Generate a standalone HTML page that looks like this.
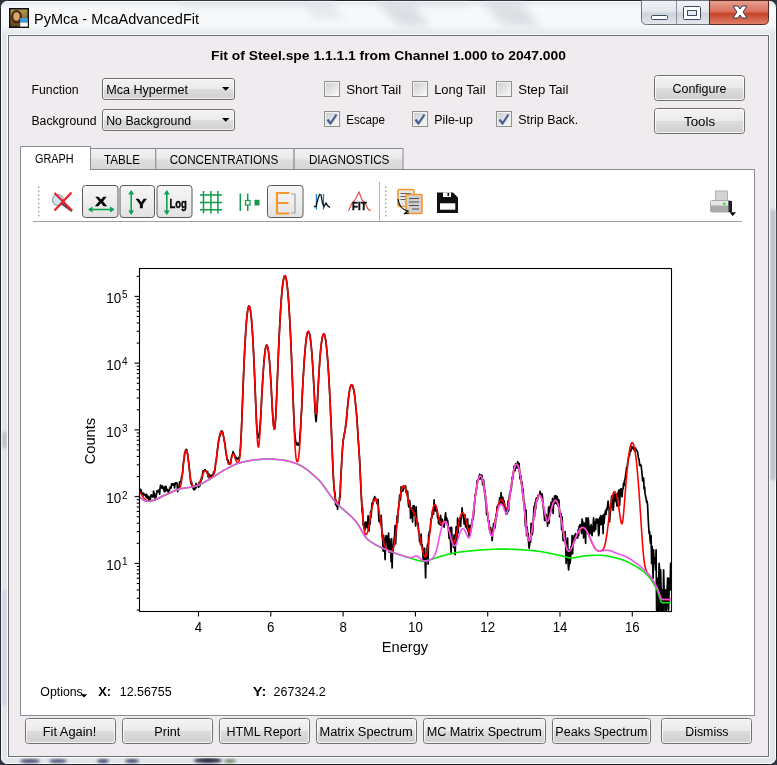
<!DOCTYPE html>
<html><head><meta charset="utf-8"><style>
html,body{margin:0;padding:0;width:777px;height:765px;overflow:hidden;background:#2c3540}
svg{display:block}
text{font-family:"Liberation Sans", sans-serif}
</style></head><body>
<svg width="777" height="765" viewBox="0 0 777 765">
<defs>
<linearGradient id="btn" x1="0" y1="0" x2="0" y2="1">
 <stop offset="0" stop-color="#f3f3f3"/><stop offset="0.48" stop-color="#ebebeb"/>
 <stop offset="0.52" stop-color="#dcdcdc"/><stop offset="1" stop-color="#cfcfcf"/>
</linearGradient>
<linearGradient id="tbtn" x1="0" y1="0" x2="0" y2="1">
 <stop offset="0" stop-color="#f6f6f6"/><stop offset="0.5" stop-color="#eeeeee"/><stop offset="1" stop-color="#e2e2e2"/>
</linearGradient>
<linearGradient id="tab" x1="0" y1="0" x2="0" y2="1">
 <stop offset="0" stop-color="#f2f2f2"/><stop offset="0.45" stop-color="#ebebeb"/>
 <stop offset="0.55" stop-color="#dddddd"/><stop offset="1" stop-color="#d6d6d6"/>
</linearGradient>
<linearGradient id="chk" x1="0" y1="0" x2="1" y2="1">
 <stop offset="0" stop-color="#cdcfd2"/><stop offset="1" stop-color="#f7f7f7"/>
</linearGradient>
<linearGradient id="title" x1="0" y1="0" x2="0" y2="1">
 <stop offset="0" stop-color="#e3e9f0"/><stop offset="0.2" stop-color="#f7f9fb"/><stop offset="0.75" stop-color="#f5f7f9"/><stop offset="1" stop-color="#e3e7eb"/>
</linearGradient>
<filter id="blur3" x="-50%" y="-50%" width="200%" height="200%"><feGaussianBlur stdDeviation="4"/></filter>
<filter id="blur1" x="-50%" y="-50%" width="200%" height="200%"><feGaussianBlur stdDeviation="1.5"/></filter>
<linearGradient id="capbtn" x1="0" y1="0" x2="0" y2="1">
 <stop offset="0" stop-color="#f0f3f7"/><stop offset="0.45" stop-color="#e3e7ec"/>
 <stop offset="0.55" stop-color="#cdd2d9"/><stop offset="1" stop-color="#e4e8ee"/>
</linearGradient>
<linearGradient id="closebtn" x1="0" y1="0" x2="0" y2="1">
 <stop offset="0" stop-color="#e8a193"/><stop offset="0.45" stop-color="#d9735f"/>
 <stop offset="0.55" stop-color="#c7432a"/><stop offset="1" stop-color="#e0826c"/>
</linearGradient>
<linearGradient id="icon" x1="0" y1="0" x2="0" y2="1">
 <stop offset="0" stop-color="#b09a50"/><stop offset="0.6" stop-color="#8a6a32"/><stop offset="1" stop-color="#5a3a1a"/>
</linearGradient>
</defs>
<rect x="0" y="0" width="777" height="765" fill="#2c3540"/>
<rect x="0.5" y="0.5" width="776" height="764" rx="7" fill="#e2e6eb" stroke="#1f2327"/>
<rect x="1.5" y="1.5" width="774" height="762" rx="6" fill="none" stroke="#ffffff" stroke-opacity="0.85"/>
<rect x="2" y="2" width="773" height="32" rx="5" fill="url(#title)"/>
<g filter="url(#blur3)" opacity="0.45"><path d="M375 2 L410 2 L430 26 L400 26 Z" fill="#b9c0c8"/><path d="M480 2 L520 2 L540 26 L505 26 Z" fill="#bcc3cb"/><path d="M300 2 L330 2 L345 18 L315 18 Z" fill="#d0d5db"/><path d="M180 2 L320 2 L320 6 L180 6 Z" fill="#c3cad3"/><path d="M400 2 L470 2 L470 6 L400 6 Z" fill="#c3cad3"/></g>
<g filter="url(#blur1)"><rect x="770.5" y="210" width="5" height="270" fill="#b9bfc5"/><rect x="2.5" y="590" width="4.5" height="115" fill="#c9cbe6" opacity="0.8"/><rect x="2.5" y="432" width="4.5" height="16" fill="#a9adb2" opacity="0.7"/></g>
<g filter="url(#blur1)" opacity="0.95"><ellipse cx="30" cy="761" rx="10" ry="2" fill="#3a3f6a"/><ellipse cx="58" cy="761" rx="9" ry="2" fill="#454a78"/><ellipse cx="103" cy="761" rx="6" ry="2" fill="#3a3f6a"/><ellipse cx="132" cy="761" rx="7" ry="2" fill="#3a3f6a"/><ellipse cx="208" cy="760.5" rx="14" ry="2.5" fill="#15182e"/><ellipse cx="230" cy="761" rx="6" ry="2" fill="#6a8a6a"/></g>
<rect x="7.5" y="34.5" width="762" height="723" fill="none" stroke="#ffffff" stroke-opacity="0.9"/>
<rect x="8.5" y="35.5" width="760" height="721" fill="#efebee" stroke="#6d6e72"/>
<rect x="9" y="8" width="20" height="20" fill="#111"/>
<rect x="10.5" y="9.5" width="17" height="17" fill="url(#icon)"/>
<ellipse cx="16.5" cy="17" rx="5.5" ry="7" fill="#4a2a12"/>
<ellipse cx="16.5" cy="16.5" rx="3.2" ry="4.2" fill="#d9a266"/>
<path d="M11 26 Q16 20 22 26 Z" fill="#6a4a22"/>
<rect x="20.2" y="18" width="7.6" height="4.6" fill="#3a9ee0"/><rect x="20.2" y="22.6" width="7.6" height="4" fill="#f4f6f8"/>
<text x="34" y="24" font-size="14.5" fill="#000" textLength="165" lengthAdjust="spacingAndGlyphs" >PyMca - McaAdvancedFit</text>
<path d="M641.5 0.5 V19.5 Q641.5 24.5 646.5 24.5 H709.5 V0.5 Z" fill="url(#capbtn)" stroke="#6b7380"/>
<line x1="676.5" y1="1" x2="676.5" y2="24" stroke="#8a929e"/>
<path d="M709.5 0.5 H768.5 V19.5 Q768.5 24.5 763.5 24.5 H709.5 Z" fill="url(#closebtn)" stroke="#5a2a22"/>
<rect x="651.5" y="15.5" width="16" height="4" rx="1" fill="#fff" stroke="#3d4a66"/>
<rect x="683.5" y="6.5" width="17" height="13" rx="1" fill="#fff" stroke="#3d4a66"/>
<rect x="687.5" y="10.5" width="9" height="5" fill="#e8ecf0" stroke="#3d4a66"/>
<path d="M733 6 L738 6 L740 9 L742 6 L747 6 L743 12 L747 18 L742 18 L740 15 L738 18 L733 18 L737 12 Z" fill="#fff" stroke="#3b3b4b" stroke-width="1"/>
<text x="211" y="59.6" font-size="12.8" font-weight="bold" fill="#000" textLength="355" lengthAdjust="spacingAndGlyphs" >Fit of Steel.spe 1.1.1.1 from Channel 1.000 to 2047.000</text>
<text x="31.5" y="94" font-size="12.5" fill="#000" textLength="47.1" lengthAdjust="spacingAndGlyphs" >Function</text>
<text x="31.5" y="125" font-size="12.5" fill="#000" textLength="65" lengthAdjust="spacingAndGlyphs" >Background</text>
<rect x="102.5" y="78.5" width="132" height="21" rx="2.5" fill="url(#btn)" stroke="#707070"/>
<rect x="103.5" y="79.5" width="130" height="19" rx="1.5" fill="none" stroke="#fcfcfc" stroke-opacity="0.7"/>
<text x="106.2" y="93.9" font-size="12.5" fill="#000" textLength="81.8" lengthAdjust="spacingAndGlyphs" >Mca Hypermet</text>
<path d="M222 87 H229.5 L225.75 90.8 Z" fill="#000"/>
<rect x="102.5" y="109.5" width="132" height="21" rx="2.5" fill="url(#btn)" stroke="#707070"/>
<rect x="103.5" y="110.5" width="130" height="19" rx="1.5" fill="none" stroke="#fcfcfc" stroke-opacity="0.7"/>
<text x="106.2" y="124.9" font-size="12.5" fill="#000" textLength="85" lengthAdjust="spacingAndGlyphs" >No Background</text>
<path d="M222 118 H229.5 L225.75 121.8 Z" fill="#000"/>
<rect x="324.5" y="81.5" width="15" height="15" fill="#f4f4f4" stroke="#8e8f8f"/>
<rect x="326" y="83" width="12" height="12" fill="url(#chk)" stroke="#f6f6f6" stroke-width="0"/>
<text x="346.2" y="94" font-size="12.5" fill="#000" textLength="55" lengthAdjust="spacingAndGlyphs" >Short Tail</text>
<rect x="324.5" y="111.5" width="15" height="15" fill="#f4f4f4" stroke="#8e8f8f"/>
<rect x="326" y="113" width="12" height="12" fill="url(#chk)" stroke="#f6f6f6" stroke-width="0"/>
<path d="M327.5 119.5 L330.5 123.5 L336.5 114.5" fill="none" stroke="#4a5b93" stroke-width="2.2" stroke-linejoin="round"/>
<text x="346.2" y="124" font-size="12.5" fill="#000" textLength="38.8" lengthAdjust="spacingAndGlyphs" >Escape</text>
<rect x="412.5" y="81.5" width="15" height="15" fill="#f4f4f4" stroke="#8e8f8f"/>
<rect x="414" y="83" width="12" height="12" fill="url(#chk)" stroke="#f6f6f6" stroke-width="0"/>
<text x="434.2" y="94" font-size="12.5" fill="#000" textLength="51.3" lengthAdjust="spacingAndGlyphs" >Long Tail</text>
<rect x="412.5" y="111.5" width="15" height="15" fill="#f4f4f4" stroke="#8e8f8f"/>
<rect x="414" y="113" width="12" height="12" fill="url(#chk)" stroke="#f6f6f6" stroke-width="0"/>
<path d="M415.5 119.5 L418.5 123.5 L424.5 114.5" fill="none" stroke="#4a5b93" stroke-width="2.2" stroke-linejoin="round"/>
<text x="434.2" y="124" font-size="12.5" fill="#000" textLength="38.6" lengthAdjust="spacingAndGlyphs" >Pile-up</text>
<rect x="496.5" y="81.5" width="15" height="15" fill="#f4f4f4" stroke="#8e8f8f"/>
<rect x="498" y="83" width="12" height="12" fill="url(#chk)" stroke="#f6f6f6" stroke-width="0"/>
<text x="518.2" y="94" font-size="12.5" fill="#000" textLength="50.2" lengthAdjust="spacingAndGlyphs" >Step Tail</text>
<rect x="496.5" y="111.5" width="15" height="15" fill="#f4f4f4" stroke="#8e8f8f"/>
<rect x="498" y="113" width="12" height="12" fill="url(#chk)" stroke="#f6f6f6" stroke-width="0"/>
<path d="M499.5 119.5 L502.5 123.5 L508.5 114.5" fill="none" stroke="#4a5b93" stroke-width="2.2" stroke-linejoin="round"/>
<text x="518.2" y="124" font-size="12.5" fill="#000" textLength="60" lengthAdjust="spacingAndGlyphs" >Strip Back.</text>
<rect x="654.5" y="75.5" width="90" height="25" rx="3" fill="url(#btn)" stroke="#707070"/>
<rect x="655.5" y="76.5" width="88" height="23" rx="2" fill="none" stroke="#fcfcfc" stroke-opacity="0.8"/>
<text x="672.5" y="92.8" font-size="12.5" fill="#000" textLength="54" lengthAdjust="spacingAndGlyphs" >Configure</text>
<rect x="654.5" y="108.5" width="90" height="25" rx="3" fill="url(#btn)" stroke="#707070"/>
<rect x="655.5" y="109.5" width="88" height="23" rx="2" fill="none" stroke="#fcfcfc" stroke-opacity="0.8"/>
<text x="684" y="125.8" font-size="12.5" fill="#000" textLength="31.1" lengthAdjust="spacingAndGlyphs" >Tools</text>
<rect x="20.5" y="169.5" width="734" height="546" fill="#fff" stroke="#898c95"/>
<rect x="90.1" y="148.5" width="65.70000000000002" height="21" fill="url(#tab)" stroke="#898c95"/>
<text x="104" y="164.3" font-size="12" fill="#000" textLength="36" lengthAdjust="spacingAndGlyphs" >TABLE</text>
<rect x="155.8" y="148.5" width="138.3" height="21" fill="url(#tab)" stroke="#898c95"/>
<text x="169.7" y="164.3" font-size="12" fill="#000" textLength="108.5" lengthAdjust="spacingAndGlyphs" >CONCENTRATIONS</text>
<rect x="294.1" y="148.5" width="108.89999999999998" height="21" fill="url(#tab)" stroke="#898c95"/>
<text x="308.9" y="164.3" font-size="12" fill="#000" textLength="80.5" lengthAdjust="spacingAndGlyphs" >DIAGNOSTICS</text>
<path d="M20.5 170 V146.5 H90.5 V170" fill="#fff" stroke="#898c95"/>
<rect x="21" y="168" width="69" height="3" fill="#fff"/>
<text x="35.1" y="163.2" font-size="12" fill="#000" textLength="38.6" lengthAdjust="spacingAndGlyphs" >GRAPH</text>
<line x1="33" y1="221.5" x2="742" y2="221.5" stroke="#a0a0a0"/>
<rect x="38" y="186.50" width="1.4" height="1.5" fill="#9a9a9a"/>
<rect x="38" y="190.55" width="1.4" height="1.5" fill="#9a9a9a"/>
<rect x="38" y="194.60" width="1.4" height="1.5" fill="#9a9a9a"/>
<rect x="38" y="198.65" width="1.4" height="1.5" fill="#9a9a9a"/>
<rect x="38" y="202.70" width="1.4" height="1.5" fill="#9a9a9a"/>
<rect x="38" y="206.75" width="1.4" height="1.5" fill="#9a9a9a"/>
<rect x="38" y="210.80" width="1.4" height="1.5" fill="#9a9a9a"/>
<rect x="38" y="214.85" width="1.4" height="1.5" fill="#9a9a9a"/>
<rect x="385" y="186.50" width="1.4" height="1.5" fill="#9a9a9a"/>
<rect x="385" y="190.55" width="1.4" height="1.5" fill="#9a9a9a"/>
<rect x="385" y="194.60" width="1.4" height="1.5" fill="#9a9a9a"/>
<rect x="385" y="198.65" width="1.4" height="1.5" fill="#9a9a9a"/>
<rect x="385" y="202.70" width="1.4" height="1.5" fill="#9a9a9a"/>
<rect x="385" y="206.75" width="1.4" height="1.5" fill="#9a9a9a"/>
<rect x="385" y="210.80" width="1.4" height="1.5" fill="#9a9a9a"/>
<rect x="385" y="214.85" width="1.4" height="1.5" fill="#9a9a9a"/>
<line x1="379.5" y1="182" x2="379.5" y2="221" stroke="#b0b0b0"/>
<circle cx="58" cy="200" r="5.5" fill="#cfe6f5" stroke="#9aa0a6" stroke-width="1.2"/>
<line x1="61" y1="203" x2="72" y2="211" stroke="#4a4a4a" stroke-width="2.2"/>
<path d="M54.5 193 L72 210.5 M71.5 192.5 L54.5 210.5" stroke="#e8202a" stroke-width="2.2"/>
<rect x="82.5" y="185.5" width="35.5" height="32" rx="3" fill="url(#tbtn)" stroke="#5a5a5a"/>
<rect x="120.0" y="185.5" width="34.5" height="32" rx="3" fill="url(#tbtn)" stroke="#5a5a5a"/>
<rect x="157.0" y="185.5" width="35.0" height="32" rx="3" fill="url(#tbtn)" stroke="#5a5a5a"/>
<rect x="267.5" y="185.5" width="35.5" height="32" rx="3" fill="url(#tbtn)" stroke="#5a5a5a"/>
<text x="95.4" y="205.6" font-size="13" font-weight="bold" stroke="#000" stroke-width="0.6" textLength="11" lengthAdjust="spacingAndGlyphs">X</text>
<path d="M89 209.5 H113.5" stroke="#10a050" stroke-width="1.6"/><path d="M88 209.5 L92.5 206.5 V212.5 Z M114.5 209.5 L110 206.5 V212.5 Z" fill="#10a050"/>
<path d="M131.2 191 V214" stroke="#10a050" stroke-width="1.6"/><path d="M131.2 190 L128.2 194.5 H134.2 Z M131.2 215 L128.2 210.5 H134.2 Z" fill="#10a050"/>
<text x="135.9" y="207.8" font-size="13.5" font-weight="bold" stroke="#000" stroke-width="0.6" textLength="10.6" lengthAdjust="spacingAndGlyphs">Y</text>
<path d="M166.8 191 V214" stroke="#10a050" stroke-width="1.6"/><path d="M166.8 190 L163.8 194.5 H169.8 Z M166.8 215 L163.8 210.5 H169.8 Z" fill="#10a050"/>
<text x="169.4" y="208.3" font-size="13" font-weight="bold" stroke="#000" stroke-width="0.4" textLength="17.4" lengthAdjust="spacingAndGlyphs">Log</text>
<path d="M203.5 191 V213.5 M210.9 191 V213.5 M217.9 191 V213.5 M200 195 H222 M200 202.4 H222 M200 209.7 H222" stroke="#139a4a" stroke-width="1.5"/>
<path d="M240.3 193.5 V211 M247.7 193.5 V211" stroke="#139a4a" stroke-width="1.5"/><rect x="245.5" y="200.5" width="4.5" height="4.5" fill="#fff" stroke="#139a4a" stroke-width="1.2"/><rect x="254.5" y="199.8" width="5" height="5.7" fill="#139a4a"/>
<path d="M289.5 193 H277 V213.5 H289.5 M277 203 H288.5" fill="none" stroke="#f59a2a" stroke-width="2.2"/>
<path d="M291 194 H295 V213 H291" fill="none" stroke="#a0a0a0" stroke-width="1.2"/>
<path d="M316.4 194 V209.5 M323.5 194 V209.5" stroke="#1a80e0" stroke-width="1.3"/>
<path d="M314 206.5 H316 L318 199 L319.5 194.5 L321 195 L322.5 203 L324 206.5 L326 203 L328 206 L330 207.5" fill="none" stroke="#111" stroke-width="1.3"/>
<path d="M348.6 210.7 L352 203 L355 200 L359.1 192.2 L362 200 L365 203 L368 209 L370.7 210.7" fill="none" stroke="#f04040" stroke-width="1.1"/>
<text x="352.1" y="209.9" font-size="10.5" font-weight="bold" stroke="#111" stroke-width="0.5" textLength="14.5" lengthAdjust="spacingAndGlyphs" fill="#111">FIT</text>
<rect x="398" y="189.5" width="16" height="17" rx="1.5" fill="#e8e8e8" stroke="#f59a2a" stroke-width="1.6"/>
<path d="M400.5 193.5 H411 M400.5 196.5 H410 M400.5 199.5 H409" stroke="#606060" stroke-width="1"/>
<rect x="406" y="194.5" width="16" height="19" rx="1" fill="#cfcfcf" stroke="#f59a2a" stroke-width="1.6"/>
<path d="M409 198.5 H419 M409 202 H419 M409 205.5 H419 M412 209 H419" stroke="#505050" stroke-width="1"/>
<path d="M398 199 Q399 209 408 211 L404 214 L409 213" fill="none" stroke="#111" stroke-width="1.2"/>
<path d="M437 192.5 H453 L458 197.5 V213 H437 Z" fill="#111"/>
<rect x="440" y="203.3" width="15.3" height="6.4" fill="#fff"/><rect x="443" y="192.5" width="8" height="4.5" fill="#fff"/><rect x="447.5" y="193" width="1.6" height="3" fill="#111"/>
<rect x="715.5" y="191" width="12" height="10" fill="#d4d4d4" stroke="#b0b0b0"/>
<path d="M713 200 H729 Q732 200 732 204 V210 Q732 212.5 729 212.5 H712.5 Q710 212.5 710 210 V203 Q710 200 713 200 Z" fill="#a9a9ad"/>
<rect x="711" y="201" width="17" height="4.5" fill="#e6e6e8"/><rect x="728.5" y="201" width="3.5" height="11" fill="#222"/>
<circle cx="724.3" cy="203.8" r="1.3" fill="#2ee02e"/>
<path d="M729.5 212.2 H736 L732.75 216 Z" fill="#000"/>
<g stroke="#000" stroke-width="1.1">
<line x1="198.50" y1="611.5" x2="198.50" y2="616.4"/>
<line x1="270.80" y1="611.5" x2="270.80" y2="616.4"/>
<line x1="343.10" y1="611.5" x2="343.10" y2="616.4"/>
<line x1="415.40" y1="611.5" x2="415.40" y2="616.4"/>
<line x1="487.70" y1="611.5" x2="487.70" y2="616.4"/>
<line x1="560.00" y1="611.5" x2="560.00" y2="616.4"/>
<line x1="632.30" y1="611.5" x2="632.30" y2="616.4"/>
<line x1="136.70" y1="610.06" x2="139.5" y2="610.06"/>
<line x1="136.70" y1="598.30" x2="139.5" y2="598.30"/>
<line x1="136.70" y1="589.96" x2="139.5" y2="589.96"/>
<line x1="136.70" y1="583.49" x2="139.5" y2="583.49"/>
<line x1="136.70" y1="578.21" x2="139.5" y2="578.21"/>
<line x1="136.70" y1="573.74" x2="139.5" y2="573.74"/>
<line x1="136.70" y1="569.87" x2="139.5" y2="569.87"/>
<line x1="136.70" y1="566.45" x2="139.5" y2="566.45"/>
<line x1="134.60" y1="563.40" x2="139.5" y2="563.40"/>
<line x1="136.70" y1="543.31" x2="139.5" y2="543.31"/>
<line x1="136.70" y1="531.55" x2="139.5" y2="531.55"/>
<line x1="136.70" y1="523.21" x2="139.5" y2="523.21"/>
<line x1="136.70" y1="516.74" x2="139.5" y2="516.74"/>
<line x1="136.70" y1="511.46" x2="139.5" y2="511.46"/>
<line x1="136.70" y1="506.99" x2="139.5" y2="506.99"/>
<line x1="136.70" y1="503.12" x2="139.5" y2="503.12"/>
<line x1="136.70" y1="499.70" x2="139.5" y2="499.70"/>
<line x1="134.60" y1="496.65" x2="139.5" y2="496.65"/>
<line x1="136.70" y1="476.56" x2="139.5" y2="476.56"/>
<line x1="136.70" y1="464.80" x2="139.5" y2="464.80"/>
<line x1="136.70" y1="456.46" x2="139.5" y2="456.46"/>
<line x1="136.70" y1="449.99" x2="139.5" y2="449.99"/>
<line x1="136.70" y1="444.71" x2="139.5" y2="444.71"/>
<line x1="136.70" y1="440.24" x2="139.5" y2="440.24"/>
<line x1="136.70" y1="436.37" x2="139.5" y2="436.37"/>
<line x1="136.70" y1="432.95" x2="139.5" y2="432.95"/>
<line x1="134.60" y1="429.90" x2="139.5" y2="429.90"/>
<line x1="136.70" y1="409.81" x2="139.5" y2="409.81"/>
<line x1="136.70" y1="398.05" x2="139.5" y2="398.05"/>
<line x1="136.70" y1="389.71" x2="139.5" y2="389.71"/>
<line x1="136.70" y1="383.24" x2="139.5" y2="383.24"/>
<line x1="136.70" y1="377.96" x2="139.5" y2="377.96"/>
<line x1="136.70" y1="373.49" x2="139.5" y2="373.49"/>
<line x1="136.70" y1="369.62" x2="139.5" y2="369.62"/>
<line x1="136.70" y1="366.20" x2="139.5" y2="366.20"/>
<line x1="134.60" y1="363.15" x2="139.5" y2="363.15"/>
<line x1="136.70" y1="343.06" x2="139.5" y2="343.06"/>
<line x1="136.70" y1="331.30" x2="139.5" y2="331.30"/>
<line x1="136.70" y1="322.96" x2="139.5" y2="322.96"/>
<line x1="136.70" y1="316.49" x2="139.5" y2="316.49"/>
<line x1="136.70" y1="311.21" x2="139.5" y2="311.21"/>
<line x1="136.70" y1="306.74" x2="139.5" y2="306.74"/>
<line x1="136.70" y1="302.87" x2="139.5" y2="302.87"/>
<line x1="136.70" y1="299.45" x2="139.5" y2="299.45"/>
<line x1="134.60" y1="296.40" x2="139.5" y2="296.40"/>
<line x1="136.70" y1="276.31" x2="139.5" y2="276.31"/>
</g>
<text x="194.80" y="632" font-size="14" textLength="7.4" lengthAdjust="spacingAndGlyphs">4</text>
<text x="267.10" y="632" font-size="14" textLength="7.4" lengthAdjust="spacingAndGlyphs">6</text>
<text x="339.40" y="632" font-size="14" textLength="7.4" lengthAdjust="spacingAndGlyphs">8</text>
<text x="408.05" y="632" font-size="14" textLength="14.7" lengthAdjust="spacingAndGlyphs">10</text>
<text x="480.35" y="632" font-size="14" textLength="14.7" lengthAdjust="spacingAndGlyphs">12</text>
<text x="552.65" y="632" font-size="14" textLength="14.7" lengthAdjust="spacingAndGlyphs">14</text>
<text x="624.95" y="632" font-size="14" textLength="14.7" lengthAdjust="spacingAndGlyphs">16</text>
<text x="106.3" y="570.20" font-size="14" textLength="14.9" lengthAdjust="spacingAndGlyphs">10</text>
<text x="122" y="565.40" font-size="10">1</text>
<text x="106.3" y="503.45" font-size="14" textLength="14.9" lengthAdjust="spacingAndGlyphs">10</text>
<text x="122" y="498.65" font-size="10">2</text>
<text x="106.3" y="436.70" font-size="14" textLength="14.9" lengthAdjust="spacingAndGlyphs">10</text>
<text x="122" y="431.90" font-size="10">3</text>
<text x="106.3" y="369.95" font-size="14" textLength="14.9" lengthAdjust="spacingAndGlyphs">10</text>
<text x="122" y="365.15" font-size="10">4</text>
<text x="106.3" y="303.20" font-size="14" textLength="14.9" lengthAdjust="spacingAndGlyphs">10</text>
<text x="122" y="298.40" font-size="10">5</text>
<text x="381.8" y="652" font-size="14.6" textLength="46.4" lengthAdjust="spacingAndGlyphs">Energy</text>
<text transform="translate(95.4 464.3) rotate(-90)" x="0" y="0" font-size="14.6" textLength="46.5" lengthAdjust="spacingAndGlyphs">Counts</text>
<clipPath id="ax"><rect x="139.5" y="268.5" width="532" height="343"/></clipPath>
<g clip-path="url(#ax)" fill="none" stroke-linejoin="round">
<path d="M139.60 489.62 L140.10 489.17 L140.60 492.14 L141.10 489.82 L141.60 492.99 L142.10 493.91 L142.60 493.04 L143.10 495.32 L143.60 493.44 L144.10 494.74 L144.60 494.34 L145.10 495.43 L145.60 494.76 L146.10 496.94 L146.60 494.44 L147.10 498.11 L147.60 496.70 L148.10 496.13 L148.60 500.36 L149.10 496.86 L149.60 497.79 L150.10 501.19 L150.60 497.86 L151.10 494.87 L151.60 496.14 L152.10 495.70 L152.60 497.01 L153.10 497.11 L153.60 491.08 L154.10 495.29 L154.60 493.60 L155.10 498.39 L155.60 495.05 L156.10 496.75 L156.60 493.83 L157.10 490.71 L157.60 491.94 L158.10 491.67 L158.60 490.27 L159.10 490.12 L159.60 494.24 L160.10 488.01 L160.60 485.13 L161.10 486.63 L161.60 487.90 L162.10 485.77 L162.60 488.34 L163.10 486.77 L163.60 487.75 L164.10 491.22 L164.60 491.77 L165.10 486.42 L165.60 491.22 L166.10 486.64 L166.60 490.45 L167.10 489.29 L167.60 490.83 L168.10 490.68 L168.60 493.43 L169.10 489.25 L169.60 490.10 L170.10 487.15 L170.60 488.05 L171.10 488.12 L171.60 483.82 L172.10 484.53 L172.60 484.02 L173.10 485.12 L173.60 484.23 L174.10 483.54 L174.60 487.85 L175.10 483.28 L175.60 483.79 L176.10 482.66 L176.60 483.34 L177.10 483.03 L177.60 491.73 L178.10 487.25 L178.60 487.53 L179.10 487.49 L179.60 481.94 L180.10 482.70 L180.60 482.57 L181.10 480.78 L181.60 476.70 L182.10 475.79 L182.60 472.94 L183.10 465.47 L183.60 460.83 L184.10 459.65 L184.60 453.42 L185.10 451.97 L185.60 450.23 L186.10 449.51 L186.60 449.47 L187.10 452.52 L187.60 453.31 L188.10 459.25 L188.60 461.57 L189.10 466.33 L189.60 471.61 L190.10 475.58 L190.60 481.41 L191.10 483.98 L191.60 482.05 L192.10 485.81 L192.60 487.49 L193.10 487.12 L193.60 489.59 L194.10 485.96 L194.60 489.63 L195.10 488.64 L195.60 488.49 L196.10 483.28 L196.60 486.83 L197.10 484.99 L197.60 485.67 L198.10 485.63 L198.60 487.33 L199.10 482.55 L199.60 482.41 L200.10 485.68 L200.60 479.88 L201.10 480.99 L201.60 477.13 L202.10 478.81 L202.60 473.75 L203.10 470.87 L203.60 471.15 L204.10 470.85 L204.60 469.73 L205.10 469.69 L205.60 471.18 L206.10 471.01 L206.60 471.76 L207.10 473.37 L207.60 471.54 L208.10 476.90 L208.60 474.99 L209.10 474.13 L209.60 479.46 L210.10 477.21 L210.60 476.52 L211.10 475.15 L211.60 476.12 L212.10 477.04 L212.60 477.08 L213.10 474.38 L213.60 472.04 L214.10 473.48 L214.60 471.33 L215.10 469.27 L215.60 462.75 L216.10 461.87 L216.60 457.55 L217.10 453.45 L217.60 448.42 L218.10 445.22 L218.60 440.35 L219.10 439.38 L219.60 436.50 L220.10 433.76 L220.60 434.27 L221.10 431.36 L221.60 432.00 L222.10 430.96 L222.60 432.25 L223.10 434.27 L223.60 436.56 L224.10 440.17 L224.60 442.06 L225.10 444.54 L225.60 449.99 L226.10 454.08 L226.60 455.78 L227.10 459.54 L227.60 460.35 L228.10 460.11 L228.60 464.17 L229.10 462.83 L229.60 463.32 L230.10 462.79 L230.60 463.82 L231.10 459.60 L231.60 456.80 L232.10 454.95 L232.60 454.19 L233.10 451.68 L233.60 453.66 L234.10 453.89 L234.60 454.68 L235.10 457.21 L235.60 458.39 L236.10 457.34 L236.60 458.67 L237.10 459.33 L237.60 458.20 L238.10 458.85 L238.60 458.76 L239.10 457.24 L239.60 456.27 L240.10 452.40 L240.60 445.17 L241.10 436.18 L241.60 425.85 L242.10 412.33 L242.60 399.65 L243.10 386.46 L243.60 374.21 L244.10 362.63 L244.60 351.90 L245.10 342.26 L245.60 333.73 L246.10 326.12 L246.60 319.97 L247.10 314.79 L247.60 310.97 L248.10 308.18 L248.60 306.43 L249.10 305.97 L249.60 306.75 L250.10 308.65 L250.60 311.50 L251.10 315.92 L251.60 320.90 L252.10 327.70 L252.60 335.14 L253.10 343.77 L253.60 353.61 L254.10 364.19 L254.60 375.99 L255.10 388.29 L255.60 400.53 L256.10 411.97 L256.60 423.53 L257.10 430.05 L257.60 434.33 L258.10 437.72 L258.60 437.33 L259.10 436.53 L259.60 431.87 L260.10 425.93 L260.60 418.85 L261.10 409.79 L261.60 398.75 L262.10 391.03 L262.60 381.88 L263.10 373.82 L263.60 366.77 L264.10 360.61 L264.60 355.24 L265.10 350.85 L265.60 347.66 L266.10 345.92 L266.60 345.04 L267.10 345.20 L267.60 346.91 L268.10 348.76 L268.60 352.50 L269.10 357.03 L269.60 362.22 L270.10 369.55 L270.60 376.88 L271.10 385.15 L271.60 394.93 L272.10 404.86 L272.60 413.74 L273.10 420.12 L273.60 425.72 L274.10 428.34 L274.60 429.15 L275.10 424.41 L275.60 419.29 L276.10 408.64 L276.60 398.26 L277.10 385.79 L277.60 373.43 L278.10 360.96 L278.60 349.44 L279.10 337.90 L279.60 327.85 L280.10 318.43 L280.60 310.02 L281.10 302.39 L281.60 295.84 L282.10 290.10 L282.60 285.36 L283.10 281.55 L283.60 278.73 L284.10 276.80 L284.60 275.83 L285.10 275.79 L285.60 276.68 L286.10 278.44 L286.60 281.15 L287.10 284.93 L287.60 289.51 L288.10 295.17 L288.60 301.57 L289.10 309.17 L289.60 317.19 L290.10 326.64 L290.60 337.02 L291.10 347.57 L291.60 359.60 L292.10 372.24 L292.60 385.20 L293.10 399.00 L293.60 409.59 L294.10 421.89 L294.60 431.00 L295.10 437.07 L295.60 440.72 L296.10 442.46 L296.60 444.69 L297.10 443.18 L297.60 444.52 L298.10 445.25 L298.60 445.13 L299.10 442.88 L299.60 441.70 L300.10 433.49 L300.60 428.12 L301.10 417.81 L301.60 410.13 L302.10 399.21 L302.60 388.31 L303.10 380.06 L303.60 371.06 L304.10 363.27 L304.60 356.27 L305.10 349.83 L305.60 344.47 L306.10 340.05 L306.60 336.43 L307.10 333.98 L307.60 332.19 L308.10 331.49 L308.60 331.66 L309.10 332.46 L309.60 334.16 L310.10 336.94 L310.60 340.55 L311.10 345.16 L311.60 350.32 L312.10 356.54 L312.60 364.31 L313.10 372.62 L313.60 381.58 L314.10 390.63 L314.60 401.42 L315.10 411.14 L315.60 417.61 L316.10 421.71 L316.60 415.29 L317.10 407.45 L317.60 399.55 L318.10 388.85 L318.60 379.31 L319.10 370.80 L319.60 363.27 L320.10 356.80 L320.60 350.47 L321.10 345.54 L321.60 341.87 L322.10 338.55 L322.60 336.18 L323.10 334.78 L323.60 333.78 L324.10 333.99 L324.60 335.23 L325.10 337.09 L325.60 339.58 L326.10 343.41 L326.60 347.97 L327.10 352.95 L327.60 359.37 L328.10 366.15 L328.60 374.17 L329.10 382.57 L329.60 391.82 L330.10 400.70 L330.60 413.58 L331.10 422.87 L331.60 436.32 L332.10 447.64 L332.60 460.75 L333.10 474.09 L333.60 481.36 L334.10 488.49 L334.60 492.10 L335.10 493.74 L335.60 504.68 L336.10 500.48 L336.60 506.21 L337.10 504.83 L337.60 509.30 L338.10 502.55 L338.60 502.49 L339.10 504.29 L339.60 497.44 L340.10 497.39 L340.60 482.32 L341.10 471.68 L341.60 464.78 L342.10 455.25 L342.60 447.29 L343.10 441.62 L343.60 438.15 L344.10 434.90 L344.60 432.23 L345.10 431.24 L345.60 425.54 L346.10 423.64 L346.60 418.62 L347.10 411.59 L347.60 407.08 L348.10 401.61 L348.60 397.01 L349.10 393.40 L349.60 390.02 L350.10 387.80 L350.60 386.32 L351.10 385.12 L351.60 384.77 L352.10 385.71 L352.60 385.81 L353.10 387.39 L353.60 389.71 L354.10 390.85 L354.60 395.46 L355.10 399.77 L355.60 404.48 L356.10 409.72 L356.60 414.15 L357.10 421.17 L357.60 429.32 L358.10 438.62 L358.60 444.53 L359.10 452.40 L359.60 458.28 L360.10 469.83 L360.60 480.68 L361.10 493.16 L361.60 501.28 L362.10 512.19 L362.60 507.86 L363.10 525.23 L363.60 521.76 L364.10 526.59 L364.60 525.04 L365.10 529.69 L365.60 522.15 L366.10 525.59 L366.60 522.03 L367.10 527.78 L367.60 524.66 L368.10 515.90 L368.60 530.11 L369.10 530.94 L369.60 519.12 L370.10 524.34 L370.60 511.57 L371.10 517.16 L371.60 508.33 L372.10 502.91 L372.60 504.65 L373.10 502.09 L373.60 498.80 L374.10 500.63 L374.60 496.61 L375.10 497.41 L375.60 498.54 L376.10 499.40 L376.60 502.32 L377.10 503.68 L377.60 504.36 L378.10 499.45 L378.60 515.60 L379.10 521.73 L379.60 519.02 L380.10 520.91 L380.60 524.42 L381.10 515.26 L381.60 522.80 L382.10 536.36 L382.60 538.70 L383.10 551.03 L383.60 535.01 L384.10 550.89 L384.60 547.19 L385.10 559.74 L385.60 538.29 L386.10 535.80 L386.60 535.73 L387.10 539.37 L387.60 548.53 L388.10 541.99 L388.60 533.22 L389.10 552.19 L389.60 539.01 L390.10 544.76 L390.60 543.12 L391.10 561.65 L391.60 538.72 L392.10 567.98 L392.60 549.68 L393.10 551.61 L393.60 544.25 L394.10 539.71 L394.60 535.77 L395.10 525.60 L395.60 543.96 L396.10 534.36 L396.60 524.54 L397.10 515.92 L397.60 522.78 L398.10 512.28 L398.60 507.66 L399.10 504.49 L399.60 495.14 L400.10 500.42 L400.60 498.94 L401.10 486.79 L401.60 491.22 L402.10 489.10 L402.60 491.12 L403.10 490.55 L403.60 487.50 L404.10 488.17 L404.60 487.64 L405.10 485.97 L405.60 486.15 L406.10 492.45 L406.60 491.29 L407.10 494.73 L407.60 491.20 L408.10 500.80 L408.60 506.19 L409.10 507.08 L409.60 500.28 L410.10 504.26 L410.60 518.45 L411.10 508.35 L411.60 509.32 L412.10 508.25 L412.60 522.03 L413.10 505.76 L413.60 511.84 L414.10 505.66 L414.60 515.37 L415.10 512.27 L415.60 526.07 L416.10 506.88 L416.60 516.49 L417.10 523.25 L417.60 522.36 L418.10 524.02 L418.60 532.02 L419.10 533.15 L419.60 541.44 L420.10 539.83 L420.60 544.76 L421.10 534.19 L421.60 544.66 L422.10 544.61 L422.60 548.43 L423.10 558.14 L423.60 561.14 L424.10 550.43 L424.60 548.23 L425.10 560.99 L425.60 577.98 L426.10 555.08 L426.60 557.79 L427.10 547.98 L427.60 544.06 L428.10 564.11 L428.60 534.73 L429.10 533.39 L429.60 530.92 L430.10 532.06 L430.60 524.58 L431.10 518.63 L431.60 518.58 L432.10 515.63 L432.60 510.52 L433.10 511.65 L433.60 514.13 L434.10 499.80 L434.60 510.32 L435.10 509.69 L435.60 510.80 L436.10 506.36 L436.60 510.11 L437.10 511.85 L437.60 517.96 L438.10 515.71 L438.60 523.76 L439.10 517.80 L439.60 519.32 L440.10 524.55 L440.60 515.44 L441.10 525.43 L441.60 520.76 L442.10 519.05 L442.60 520.66 L443.10 523.28 L443.60 523.23 L444.10 527.18 L444.60 522.20 L445.10 517.17 L445.60 512.86 L446.10 520.28 L446.60 517.78 L447.10 520.17 L447.60 520.12 L448.10 524.68 L448.60 531.34 L449.10 538.39 L449.60 535.29 L450.10 527.62 L450.60 543.52 L451.10 552.45 L451.60 527.46 L452.10 541.48 L452.60 543.30 L453.10 543.24 L453.60 547.33 L454.10 534.79 L454.60 543.07 L455.10 554.77 L455.60 541.09 L456.10 526.96 L456.60 542.85 L457.10 539.17 L457.60 518.18 L458.10 532.93 L458.60 521.58 L459.10 525.53 L459.60 519.65 L460.10 517.89 L460.60 526.45 L461.10 518.62 L461.60 518.56 L462.10 507.91 L462.60 515.22 L463.10 513.68 L463.60 514.35 L464.10 523.90 L464.60 515.76 L465.10 514.93 L465.60 527.01 L466.10 523.67 L466.60 519.74 L467.10 529.26 L467.60 518.73 L468.10 531.78 L468.60 529.08 L469.10 536.13 L469.60 525.41 L470.10 534.44 L470.60 528.84 L471.10 531.42 L471.60 523.02 L472.10 522.96 L472.60 518.14 L473.10 518.97 L473.60 515.50 L474.10 507.10 L474.60 503.62 L475.10 494.43 L475.60 494.76 L476.10 490.29 L476.60 489.22 L477.10 480.91 L477.60 480.85 L478.10 480.29 L478.60 478.81 L479.10 477.39 L479.60 474.38 L480.10 479.09 L480.60 476.76 L481.10 475.01 L481.60 477.98 L482.10 475.51 L482.60 484.78 L483.10 483.30 L483.60 480.10 L484.10 485.78 L484.60 492.87 L485.10 490.57 L485.60 501.21 L486.10 502.20 L486.60 514.71 L487.10 510.06 L487.60 515.42 L488.10 519.97 L488.60 521.98 L489.10 520.86 L489.60 530.55 L490.10 527.72 L490.60 527.66 L491.10 530.36 L491.60 531.78 L492.10 540.57 L492.60 534.87 L493.10 528.68 L493.60 523.56 L494.10 523.50 L494.60 528.48 L495.10 527.07 L495.60 521.07 L496.10 514.32 L496.60 516.93 L497.10 506.71 L497.60 506.65 L498.10 506.58 L498.60 503.99 L499.10 505.79 L499.60 497.87 L500.10 504.40 L500.60 499.25 L501.10 492.71 L501.60 500.71 L502.10 504.75 L502.60 496.98 L503.10 499.43 L503.60 505.83 L504.10 500.92 L504.60 505.70 L505.10 509.88 L505.60 508.32 L506.10 513.83 L506.60 513.76 L507.10 513.69 L507.60 511.91 L508.10 500.93 L508.60 510.96 L509.10 500.79 L509.60 494.14 L510.10 494.07 L510.60 490.58 L511.10 490.51 L511.60 485.29 L512.10 477.30 L512.60 479.36 L513.10 475.18 L513.60 472.15 L514.10 466.39 L514.60 467.78 L515.10 470.66 L515.60 463.95 L516.10 464.88 L516.60 467.87 L517.10 467.79 L517.60 461.59 L518.10 467.84 L518.60 467.57 L519.10 463.44 L519.60 472.60 L520.10 478.82 L520.60 475.30 L521.10 476.77 L521.60 485.21 L522.10 482.11 L522.60 493.63 L523.10 489.16 L523.60 499.25 L524.10 504.92 L524.60 503.47 L525.10 521.53 L525.60 526.99 L526.10 510.05 L526.60 535.69 L527.10 526.76 L527.60 533.54 L528.10 533.46 L528.60 542.37 L529.10 548.11 L529.60 544.98 L530.10 539.62 L530.60 542.06 L531.10 523.24 L531.60 526.06 L532.10 534.83 L532.60 532.75 L533.10 524.33 L533.60 514.50 L534.10 506.34 L534.60 516.49 L535.10 502.50 L535.60 509.42 L536.10 499.08 L536.60 497.79 L537.10 500.18 L537.60 499.46 L538.10 495.27 L538.60 495.74 L539.10 495.11 L539.60 495.03 L540.10 491.36 L540.60 493.36 L541.10 496.65 L541.60 494.42 L542.10 493.89 L542.60 498.44 L543.10 506.17 L543.60 509.59 L544.10 513.46 L544.60 520.45 L545.10 515.61 L545.60 520.45 L546.10 514.51 L546.60 517.93 L547.10 520.45 L547.60 526.27 L548.10 517.93 L548.60 506.99 L549.10 523.21 L549.60 510.51 L550.10 506.17 L550.60 511.46 L551.10 502.40 L551.60 506.99 L552.10 505.38 L552.60 498.44 L553.10 513.46 L553.60 502.40 L554.10 503.85 L554.60 496.08 L555.10 503.12 L555.60 495.51 L556.10 496.08 L556.60 503.85 L557.10 496.65 L557.60 499.70 L558.10 506.17 L558.60 499.70 L559.10 501.02 L559.60 516.74 L560.10 516.74 L560.60 515.61 L561.10 513.46 L561.60 529.68 L562.10 516.74 L562.60 529.68 L563.10 540.54 L563.60 540.54 L564.10 540.54 L564.60 540.54 L565.10 531.55 L565.60 540.54 L566.10 563.40 L566.60 553.65 L567.10 543.31 L567.60 538.02 L568.10 563.40 L568.60 569.87 L569.10 563.40 L569.60 549.77 L570.10 563.40 L570.60 558.11 L571.10 546.36 L571.60 553.65 L572.10 535.70 L572.60 553.65 L573.10 538.02 L573.60 540.54 L574.10 535.70 L574.60 540.54 L575.10 535.70 L575.60 533.55 L576.10 538.02 L576.60 538.02 L577.10 535.70 L577.60 538.02 L578.10 529.68 L578.60 535.70 L579.10 526.27 L579.60 529.68 L580.10 524.70 L580.60 529.68 L581.10 524.70 L581.60 533.55 L582.10 519.16 L582.60 521.80 L583.10 523.21 L583.60 538.02 L584.10 526.27 L584.60 523.21 L585.10 531.55 L585.60 543.31 L586.10 517.93 L586.60 520.45 L587.10 527.92 L587.60 531.55 L588.10 517.93 L588.60 521.80 L589.10 535.70 L589.60 526.27 L590.10 533.55 L590.60 531.55 L591.10 524.70 L591.60 531.55 L592.10 535.70 L592.60 527.92 L593.10 526.27 L593.60 517.93 L594.10 531.55 L594.60 521.80 L595.10 527.92 L595.60 529.68 L596.10 519.16 L596.60 523.21 L597.10 520.45 L597.60 519.16 L598.10 521.80 L598.60 535.70 L599.10 533.55 L599.60 517.93 L600.10 524.70 L600.60 515.61 L601.10 524.70 L601.60 517.93 L602.10 517.93 L602.60 515.61 L603.10 533.55 L603.60 514.51 L604.10 523.21 L604.60 516.74 L605.10 512.44 L605.60 510.51 L606.10 514.51 L606.60 508.70 L607.10 509.59 L607.60 505.38 L608.10 501.02 L608.60 505.38 L609.10 508.70 L609.60 521.80 L610.10 514.51 L610.60 509.59 L611.10 506.99 L611.60 496.08 L612.10 501.02 L612.60 497.83 L613.10 510.51 L613.60 506.17 L614.10 493.89 L614.60 501.02 L615.10 496.08 L615.60 494.42 L616.10 501.02 L616.60 503.12 L617.10 506.17 L617.60 493.89 L618.10 493.36 L618.60 490.89 L619.10 489.95 L619.60 505.38 L620.10 494.42 L620.60 489.04 L621.10 488.60 L621.60 495.51 L622.10 496.65 L622.60 489.49 L623.10 489.04 L623.60 483.02 L624.10 485.68 L624.60 480.26 L625.10 478.66 L625.60 475.14 L626.10 471.76 L626.60 467.43 L627.10 469.17 L627.60 462.93 L628.10 461.17 L628.60 457.95 L629.10 453.96 L629.60 455.19 L630.10 450.58 L630.60 449.08 L631.10 450.94 L631.60 446.30 L632.10 448.41 L632.60 448.09 L633.10 447.23 L633.60 448.97 L634.10 449.31 L634.60 451.06 L635.10 450.46 L635.60 448.20 L636.10 449.99 L636.60 450.46 L637.10 450.82 L637.60 452.41 L638.10 455.61 L638.60 459.20 L639.10 459.20 L639.60 465.39 L640.10 464.80 L640.60 464.61 L641.10 465.59 L641.60 469.63 L642.10 474.33 L642.60 480.93 L643.10 478.35 L643.60 478.04 L644.10 489.04 L644.60 486.90 L645.10 493.89 L645.60 496.65 L646.10 497.83 L646.60 502.40 L647.10 501.02 L647.60 505.38 L648.10 516.74 L648.60 526.27 L649.10 533.55 L649.60 531.55 L650.10 540.54 L650.60 543.31 L651.10 535.70 L651.60 563.40 L652.10 546.36 L652.60 563.40 L653.10 578.21 L653.60 549.77 L654.10 563.40 L654.60 563.40 L655.10 558.11 L655.60 569.87 L656.10 549.77 L656.60 610.06 L657.10 578.21 L657.60 610.06 L658.10 616.50 L658.60 589.96 L659.10 563.40 L659.60 569.87 L660.10 616.50 L660.60 569.87 L661.10 589.96 L661.60 610.06 L662.10 589.96 L662.60 616.50 L663.10 610.06 L663.60 569.87 L664.10 589.96 L664.60 589.96 L665.10 616.50 L665.60 610.06 L666.10 589.96 L666.60 610.06 L667.10 589.96 L667.60 578.21 L668.10 578.21 L668.60 610.06 L669.10 589.96 L669.60 578.21 L670.10 589.96 L670.60 563.40 L671.10 589.96" stroke="#000" stroke-width="1.7"/>
<path d="M139.50 491.92 L140.00 492.51 L140.50 493.16 L141.00 493.86 L141.50 494.59 L142.00 495.34 L142.50 496.09 L143.00 496.82 L143.50 497.53 L144.00 498.19 L144.50 498.79 L145.00 499.33 L145.50 499.81 L146.00 500.20 L146.50 500.52 L147.00 500.76 L147.50 500.92 L148.00 501.02 L148.50 501.07 L149.00 501.09 L149.50 501.08 L150.00 501.04 L150.50 500.98 L151.00 500.89 L151.50 500.79 L152.00 500.67 L152.50 500.54 L153.00 500.39 L153.50 500.23 L154.00 500.06 L154.50 499.89 L155.00 499.70 L155.50 499.50 L156.00 499.30 L156.50 499.09 L157.00 498.87 L157.50 498.65 L158.00 498.42 L158.50 498.19 L159.00 497.96 L159.50 497.72 L160.00 497.48 L160.50 497.24 L161.00 496.99 L161.50 496.75 L162.00 496.51 L162.50 496.27 L163.00 496.03 L163.50 495.79 L164.00 495.56 L164.50 495.33 L165.00 495.10 L165.50 494.88 L166.00 494.67 L166.50 494.46 L167.00 494.26 L167.50 494.05 L168.00 493.84 L168.50 493.62 L169.00 493.39 L169.50 493.15 L170.00 492.91 L170.50 492.67 L171.00 492.43 L171.50 492.18 L172.00 491.94 L172.50 491.70 L173.00 491.46 L173.50 491.22 L174.00 490.99 L174.50 490.76 L175.00 490.55 L175.50 490.34 L176.00 490.14 L176.50 489.94 L177.00 489.76 L177.50 489.57 L178.00 489.37 L178.50 489.14 L179.00 488.80 L179.50 488.27 L180.00 487.42 L180.50 486.08 L181.00 484.06 L181.50 481.24 L182.00 477.61 L182.50 473.32 L183.00 468.67 L183.50 463.99 L184.00 459.65 L184.50 455.92 L185.00 453.02 L185.50 451.10 L186.00 450.24 L186.50 450.48 L187.00 451.80 L187.50 454.15 L188.00 457.39 L188.50 461.35 L189.00 465.76 L189.50 470.31 L190.00 474.63 L190.50 478.40 L191.00 481.39 L191.50 483.55 L192.00 484.95 L192.50 485.77 L193.00 486.20 L193.50 486.37 L194.00 486.39 L194.50 486.34 L195.00 486.24 L195.50 486.12 L196.00 485.98 L196.50 485.81 L197.00 485.60 L197.50 485.35 L198.00 485.03 L198.50 484.62 L199.00 484.08 L199.50 483.38 L200.00 482.49 L200.50 481.38 L201.00 480.07 L201.50 478.59 L202.00 477.01 L202.50 475.41 L203.00 473.91 L203.50 472.60 L204.00 471.57 L204.50 470.88 L205.00 470.57 L205.50 470.64 L206.00 471.06 L206.50 471.78 L207.00 472.70 L207.50 473.73 L208.00 474.77 L208.50 475.73 L209.00 476.53 L209.50 477.13 L210.00 477.52 L210.50 477.69 L211.00 477.66 L211.50 477.45 L212.00 477.04 L212.50 476.41 L213.00 475.53 L213.50 474.31 L214.00 472.70 L214.50 470.62 L215.00 468.02 L215.50 464.93 L216.00 461.41 L216.50 457.57 L217.00 453.57 L217.50 449.55 L218.00 445.69 L218.50 442.12 L219.00 438.94 L219.50 436.25 L220.00 434.12 L220.50 432.58 L221.00 431.67 L221.50 431.40 L222.00 431.77 L222.50 432.76 L223.00 434.35 L223.50 436.49 L224.00 439.10 L224.50 442.11 L225.00 445.39 L225.50 448.80 L226.00 452.20 L226.50 455.40 L227.00 458.27 L227.50 460.66 L228.00 462.49 L228.50 463.69 L229.00 464.22 L229.50 464.05 L230.00 463.22 L230.50 461.81 L231.00 460.00 L231.50 458.05 L232.00 456.26 L232.50 454.90 L233.00 454.16 L233.50 454.13 L234.00 454.79 L234.50 455.99 L235.00 457.52 L235.50 459.13 L236.00 460.57 L236.50 461.68 L237.00 462.41 L237.50 462.75 L238.00 462.72 L238.50 462.26 L239.00 461.16 L239.50 458.99 L240.00 455.09 L240.50 448.79 L241.00 439.80 L241.50 428.51 L242.00 415.76 L242.50 402.45 L243.00 389.25 L243.50 376.60 L244.00 364.76 L244.50 353.88 L245.00 344.04 L245.50 335.30 L246.00 327.68 L246.50 321.19 L247.00 315.85 L247.50 311.66 L248.00 308.63 L248.50 306.76 L249.00 306.05 L249.50 306.49 L250.00 308.10 L250.50 310.87 L251.00 314.79 L251.50 319.86 L252.00 326.08 L252.50 333.43 L253.00 341.90 L253.50 351.46 L254.00 362.06 L254.50 373.61 L255.00 385.94 L255.50 398.78 L256.00 411.67 L256.50 423.86 L257.00 434.35 L257.50 442.09 L258.00 446.39 L258.50 447.10 L259.00 444.52 L259.50 439.13 L260.00 431.53 L260.50 422.45 L261.00 412.61 L261.50 402.60 L262.00 392.89 L262.50 383.77 L263.00 375.44 L263.50 368.01 L264.00 361.56 L264.50 356.15 L265.00 351.79 L265.50 348.51 L266.00 346.31 L266.50 345.22 L267.00 345.21 L267.50 346.31 L268.00 348.50 L268.50 351.78 L269.00 356.14 L269.50 361.56 L270.00 368.01 L270.50 375.45 L271.00 383.79 L271.50 392.86 L272.00 402.33 L272.50 411.64 L273.00 419.86 L273.50 425.90 L274.00 428.97 L274.50 428.93 L275.00 425.98 L275.50 420.22 L276.00 411.69 L276.50 400.88 L277.00 388.67 L277.50 375.98 L278.00 363.44 L278.50 351.44 L279.00 340.18 L279.50 329.76 L280.00 320.22 L280.50 311.58 L281.00 303.86 L281.50 297.07 L282.00 291.20 L282.50 286.27 L283.00 282.28 L283.50 279.22 L284.00 277.10 L284.50 275.92 L285.00 275.67 L285.50 276.37 L286.00 278.00 L286.50 280.57 L287.00 284.07 L287.50 288.51 L288.00 293.89 L288.50 300.19 L289.00 307.43 L289.50 315.59 L290.00 324.67 L290.50 334.65 L291.00 345.52 L291.50 357.22 L292.00 369.70 L292.50 382.83 L293.00 396.41 L293.50 410.10 L294.00 423.34 L294.50 435.38 L295.00 445.39 L295.50 452.82 L296.00 457.68 L296.50 460.44 L297.00 461.66 L297.50 461.73 L298.00 460.70 L298.50 458.38 L299.00 454.45 L299.50 448.66 L300.00 441.04 L300.50 431.95 L301.00 421.91 L301.50 411.48 L302.00 401.10 L302.50 391.06 L303.00 381.58 L303.50 372.78 L304.00 364.74 L304.50 357.53 L305.00 351.15 L305.50 345.64 L306.00 341.02 L306.50 337.27 L307.00 334.42 L307.50 332.47 L308.00 331.41 L308.50 331.26 L309.00 332.00 L309.50 333.64 L310.00 336.18 L310.50 339.62 L311.00 343.95 L311.50 349.16 L312.00 355.25 L312.50 362.19 L313.00 369.95 L313.50 378.44 L314.00 387.47 L314.50 396.65 L315.00 405.16 L315.50 411.59 L316.00 414.17 L316.50 412.03 L317.00 406.03 L317.50 397.90 L318.00 389.07 L318.50 380.35 L319.00 372.13 L319.50 364.60 L320.00 357.85 L320.50 351.91 L321.00 346.79 L321.50 342.52 L322.00 339.10 L322.50 336.53 L323.00 334.82 L323.50 333.96 L324.00 333.96 L324.50 334.82 L325.00 336.53 L325.50 339.10 L326.00 342.53 L326.50 346.81 L327.00 351.94 L327.50 357.92 L328.00 364.75 L328.50 372.40 L329.00 380.87 L329.50 390.14 L330.00 400.16 L330.50 410.89 L331.00 422.21 L331.50 433.98 L332.00 445.94 L332.50 457.73 L333.00 468.82 L333.50 478.63 L334.00 486.64 L334.50 492.65 L335.00 496.80 L335.50 499.53 L336.00 501.28 L336.50 502.43 L337.00 503.22 L337.50 503.75 L338.00 504.00 L338.50 503.75 L339.00 502.50 L339.50 499.42 L340.00 493.72 L340.50 485.36 L341.00 475.34 L341.50 465.12 L342.00 455.87 L342.50 448.27 L343.00 442.56 L343.50 438.60 L344.00 435.93 L344.50 433.81 L345.00 431.36 L345.50 427.96 L346.00 423.46 L346.50 418.20 L347.00 412.69 L347.50 407.33 L348.00 402.39 L348.50 397.99 L349.00 394.19 L349.50 391.02 L350.00 388.48 L350.50 386.59 L351.00 385.33 L351.50 384.73 L352.00 384.77 L352.50 385.46 L353.00 386.80 L353.50 388.78 L354.00 391.40 L354.50 394.68 L355.00 398.59 L355.50 403.14 L356.00 408.32 L356.50 414.12 L357.00 420.54 L357.50 427.56 L358.00 435.15 L358.50 443.28 L359.00 451.90 L359.50 460.93 L360.00 470.28 L360.50 479.78 L361.00 489.22 L361.50 498.34 L362.00 506.80 L362.50 514.29 L363.00 520.57 L363.50 525.52 L364.00 529.19 L364.50 531.75 L365.00 533.40 L365.50 534.31 L366.00 534.59 L366.50 534.32 L367.00 533.52 L367.50 532.19 L368.00 530.40 L368.50 528.18 L369.00 525.61 L369.50 522.76 L370.00 519.72 L370.50 516.61 L371.00 513.53 L371.50 510.57 L372.00 507.82 L372.50 505.34 L373.00 503.20 L373.50 501.43 L374.00 500.07 L374.50 499.14 L375.00 498.67 L375.50 498.65 L376.00 499.10 L376.50 500.01 L377.00 501.38 L377.50 503.18 L378.00 505.41 L378.50 508.02 L379.00 510.97 L379.50 514.22 L380.00 517.70 L380.50 521.33 L381.00 525.02 L381.50 528.67 L382.00 532.18 L382.50 535.45 L383.00 538.40 L383.50 540.97 L384.00 543.14 L384.50 544.91 L385.00 546.33 L385.50 547.44 L386.00 548.29 L386.50 548.95 L387.00 549.46 L387.50 549.87 L388.00 550.19 L388.50 550.46 L389.00 550.69 L389.50 550.87 L390.00 550.99 L390.50 551.05 L391.00 551.01 L391.50 550.82 L392.00 550.43 L392.50 549.77 L393.00 548.74 L393.50 547.25 L394.00 545.24 L394.50 542.64 L395.00 539.45 L395.50 535.73 L396.00 531.56 L396.50 527.08 L397.00 522.42 L397.50 517.71 L398.00 513.09 L398.50 508.66 L399.00 504.49 L399.50 500.67 L400.00 497.23 L400.50 494.21 L401.00 491.63 L401.50 489.52 L402.00 487.89 L402.50 486.73 L403.00 486.04 L403.50 485.82 L404.00 486.05 L404.50 486.70 L405.00 487.74 L405.50 489.13 L406.00 490.81 L406.50 492.73 L407.00 494.81 L407.50 496.96 L408.00 499.09 L408.50 501.12 L409.00 502.98 L409.50 504.62 L410.00 506.02 L410.50 507.17 L411.00 508.13 L411.50 508.93 L412.00 509.65 L412.50 510.34 L413.00 511.06 L413.50 511.88 L414.00 512.81 L414.50 513.91 L415.00 515.18 L415.50 516.64 L416.00 518.31 L416.50 520.17 L417.00 522.23 L417.50 524.48 L418.00 526.88 L418.50 529.44 L419.00 532.10 L419.50 534.85 L420.00 537.63 L420.50 540.39 L421.00 543.10 L421.50 545.69 L422.00 548.11 L422.50 550.32 L423.00 552.27 L423.50 553.92 L424.00 555.23 L424.50 556.17 L425.00 556.69 L425.50 556.74 L426.00 556.23 L426.50 555.10 L427.00 553.27 L427.50 550.73 L428.00 547.50 L428.50 543.67 L429.00 539.39 L429.50 534.84 L430.00 530.21 L430.50 525.66 L431.00 521.34 L431.50 517.37 L432.00 513.84 L432.50 510.81 L433.00 508.34 L433.50 506.46 L434.00 505.18 L434.50 504.51 L435.00 504.44 L435.50 504.95 L436.00 506.00 L436.50 507.54 L437.00 509.49 L437.50 511.75 L438.00 514.19 L438.50 516.64 L439.00 518.95 L439.50 520.94 L440.00 522.47 L440.50 523.49 L441.00 523.98 L441.50 524.01 L442.00 523.71 L442.50 523.21 L443.00 522.63 L443.50 522.09 L444.00 521.66 L444.50 521.42 L445.00 521.41 L445.50 521.64 L446.00 522.14 L446.50 522.89 L447.00 523.91 L447.50 525.16 L448.00 526.64 L448.50 528.30 L449.00 530.12 L449.50 532.04 L450.00 534.02 L450.50 535.98 L451.00 537.86 L451.50 539.57 L452.00 541.03 L452.50 542.15 L453.00 542.85 L453.50 543.07 L454.00 542.76 L454.50 541.94 L455.00 540.61 L455.50 538.84 L456.00 536.72 L456.50 534.32 L457.00 531.76 L457.50 529.13 L458.00 526.51 L458.50 523.98 L459.00 521.62 L459.50 519.46 L460.00 517.56 L460.50 515.95 L461.00 514.65 L461.50 513.69 L462.00 513.08 L462.50 512.82 L463.00 512.91 L463.50 513.36 L464.00 514.15 L464.50 515.27 L465.00 516.70 L465.50 518.40 L466.00 520.33 L466.50 522.44 L467.00 524.63 L467.50 526.82 L468.00 528.86 L468.50 530.62 L469.00 531.91 L469.50 532.56 L470.00 532.43 L470.50 531.42 L471.00 529.53 L471.50 526.84 L472.00 523.49 L472.50 519.65 L473.00 515.49 L473.50 511.19 L474.00 506.87 L474.50 502.65 L475.00 498.60 L475.50 494.78 L476.00 491.25 L476.50 488.03 L477.00 485.16 L477.50 482.66 L478.00 480.53 L478.50 478.79 L479.00 477.45 L479.50 476.51 L480.00 475.97 L480.50 475.84 L481.00 476.12 L481.50 476.81 L482.00 477.90 L482.50 479.40 L483.00 481.28 L483.50 483.55 L484.00 486.19 L484.50 489.19 L485.00 492.52 L485.50 496.15 L486.00 500.06 L486.50 504.18 L487.00 508.47 L487.50 512.82 L488.00 517.16 L488.50 521.34 L489.00 525.23 L489.50 528.67 L490.00 531.50 L490.50 533.58 L491.00 534.82 L491.50 535.21 L492.00 534.76 L492.50 533.58 L493.00 531.79 L493.50 529.54 L494.00 526.97 L494.50 524.19 L495.00 521.31 L495.50 518.43 L496.00 515.62 L496.50 512.93 L497.00 510.42 L497.50 508.12 L498.00 506.06 L498.50 504.25 L499.00 502.73 L499.50 501.50 L500.00 500.57 L500.50 499.94 L501.00 499.61 L501.50 499.58 L502.00 499.84 L502.50 500.37 L503.00 501.15 L503.50 502.14 L504.00 503.29 L504.50 504.53 L505.00 505.78 L505.50 506.91 L506.00 507.80 L506.50 508.28 L507.00 508.23 L507.50 507.53 L508.00 506.11 L508.50 504.01 L509.00 501.31 L509.50 498.14 L510.00 494.65 L510.50 491.01 L511.00 487.35 L511.50 483.77 L512.00 480.37 L512.50 477.20 L513.00 474.32 L513.50 471.76 L514.00 469.55 L514.50 467.70 L515.00 466.23 L515.50 465.14 L516.00 464.45 L516.50 464.16 L517.00 464.26 L517.50 464.77 L518.00 465.67 L518.50 466.98 L519.00 468.68 L519.50 470.77 L520.00 473.24 L520.50 476.09 L521.00 479.31 L521.50 482.88 L522.00 486.78 L522.50 490.98 L523.00 495.45 L523.50 500.15 L524.00 505.03 L524.50 510.00 L525.00 514.99 L525.50 519.89 L526.00 524.57 L526.50 528.90 L527.00 532.73 L527.50 535.93 L528.00 538.38 L528.50 540.02 L529.00 540.79 L529.50 540.71 L530.00 539.83 L530.50 538.24 L531.00 536.04 L531.50 533.34 L532.00 530.27 L532.50 526.94 L533.00 523.47 L533.50 519.96 L534.00 516.50 L534.50 513.15 L535.00 509.98 L535.50 507.04 L536.00 504.37 L536.50 502.00 L537.00 499.95 L537.50 498.25 L538.00 496.92 L538.50 495.95 L539.00 495.36 L539.50 495.15 L540.00 495.31 L540.50 495.86 L541.00 496.77 L541.50 498.03 L542.00 499.63 L542.50 501.53 L543.00 503.71 L543.50 506.10 L544.00 508.64 L544.50 511.24 L545.00 513.79 L545.50 516.15 L546.00 518.19 L546.50 519.76 L547.00 520.75 L547.50 521.09 L548.00 520.78 L548.50 519.88 L549.00 518.49 L549.50 516.74 L550.00 514.76 L550.50 512.67 L551.00 510.58 L551.50 508.57 L552.00 506.71 L552.50 505.03 L553.00 503.57 L553.50 502.36 L554.00 501.41 L554.50 500.75 L555.00 500.37 L555.50 500.28 L556.00 500.49 L556.50 500.99 L557.00 501.78 L557.50 502.87 L558.00 504.24 L558.50 505.88 L559.00 507.79 L559.50 509.94 L560.00 512.33 L560.50 514.94 L561.00 517.72 L561.50 520.67 L562.00 523.73 L562.50 526.86 L563.00 530.01 L563.50 533.14 L564.00 536.16 L564.50 539.03 L565.00 541.69 L565.50 544.07 L566.00 546.14 L566.50 547.86 L567.00 549.22 L567.50 550.23 L568.00 550.88 L568.50 551.21 L569.00 551.25 L569.50 551.02 L570.00 550.57 L570.50 549.92 L571.00 549.10 L571.50 548.14 L572.00 547.07 L572.50 545.90 L573.00 544.67 L573.50 543.39 L574.00 542.08 L574.50 540.76 L575.00 539.44 L575.50 538.13 L576.00 536.86 L576.50 535.63 L577.00 534.46 L577.50 533.35 L578.00 532.32 L578.50 531.37 L579.00 530.51 L579.50 529.75 L580.00 529.09 L580.50 528.54 L581.00 528.09 L581.50 527.76 L582.00 527.55 L582.50 527.45 L583.00 527.47 L583.50 527.60 L584.00 527.85 L584.50 528.22 L585.00 528.69 L585.50 529.26 L586.00 529.92 L586.50 530.69 L587.00 531.53 L587.50 532.46 L588.00 533.45 L588.50 534.50 L589.00 535.60 L589.50 536.74 L590.00 537.91 L590.50 539.09 L591.00 540.27 L591.50 541.44 L592.00 542.58 L592.50 543.69 L593.00 544.74 L593.50 545.73 L594.00 546.65 L594.50 547.49 L595.00 548.24 L595.50 548.91 L596.00 549.49 L596.50 549.97 L597.00 550.37 L597.50 550.68 L598.00 550.92 L598.50 551.08 L599.00 551.17 L599.50 551.20 L600.00 551.17 L600.50 551.08 L601.00 550.92 L601.50 550.70 L602.00 550.39 L602.50 549.96 L603.00 549.38 L603.50 548.60 L604.00 547.56 L604.50 546.21 L605.00 544.49 L605.50 542.34 L606.00 539.76 L606.50 536.74 L607.00 533.34 L607.50 529.63 L608.00 525.70 L608.50 521.67 L609.00 517.62 L609.50 513.66 L610.00 509.88 L610.50 506.34 L611.00 503.10 L611.50 500.21 L612.00 497.70 L612.50 495.60 L613.00 493.93 L613.50 492.71 L614.00 491.95 L614.50 491.65 L615.00 491.82 L615.50 492.46 L616.00 493.55 L616.50 495.11 L617.00 497.10 L617.50 499.51 L618.00 502.31 L618.50 505.45 L619.00 508.86 L619.50 512.42 L620.00 515.96 L620.50 519.25 L621.00 521.93 L621.50 523.59 L622.00 523.82 L622.50 522.33 L623.00 519.13 L623.50 514.48 L624.00 508.78 L624.50 502.48 L625.00 495.94 L625.50 489.41 L626.00 483.08 L626.50 477.07 L627.00 471.45 L627.50 466.27 L628.00 461.57 L628.50 457.37 L629.00 453.67 L629.50 450.50 L630.00 447.86 L630.50 445.75 L631.00 444.17 L631.50 443.14 L632.00 442.65 L632.50 442.70 L633.00 443.29 L633.50 444.42 L634.00 446.09 L634.50 448.30 L635.00 451.05 L635.50 454.33 L636.00 458.14 L636.50 462.48 L637.00 467.33 L637.50 472.68 L638.00 478.52 L638.50 484.82 L639.00 491.55 L639.50 498.66 L640.00 506.09 L640.50 513.74 L641.00 521.50 L641.50 529.21 L642.00 536.67 L642.50 543.67 L643.00 549.99 L643.50 555.46 L644.00 559.98 L644.50 563.58 L645.00 566.34 L645.50 568.42 L646.00 569.98 L646.50 571.18 L647.00 572.13 L647.50 572.92 L648.00 573.63 L648.50 574.30 L649.00 574.96 L649.50 575.62 L650.00 576.28 L650.50 576.96 L651.00 577.66 L651.50 578.38 L652.00 579.12 L652.50 579.88 L653.00 580.65 L653.50 581.44 L654.00 582.25 L654.50 583.08 L655.00 583.92 L655.50 584.78 L656.00 585.65 L656.50 586.54 L657.00 587.46 L657.50 588.59 L658.00 589.91 L658.50 591.37 L659.00 592.87 L659.50 594.37 L660.00 595.79 L660.50 597.06 L661.00 598.12 L661.50 598.91 L662.00 599.36 L662.50 599.45 L663.00 599.45 L663.50 599.46 L664.00 599.47 L664.50 599.47 L665.00 599.48 L665.50 599.48 L666.00 599.49 L666.50 599.49 L667.00 599.49 L667.50 599.49 L668.00 599.50 L668.50 599.50 L669.00 599.50 L669.50 599.50 L670.00 599.50 L670.50 599.50 L671.00 599.50 L671.50 599.50" stroke="#ff0000" stroke-width="1.6"/>
<path d="M139.50 497.00 L140.00 497.40 L140.50 497.79 L141.00 498.18 L141.50 498.56 L142.00 498.93 L142.50 499.28 L143.00 499.61 L143.50 499.92 L144.00 500.21 L144.50 500.47 L145.00 500.71 L145.50 500.90 L146.00 501.06 L146.50 501.19 L147.00 501.27 L147.50 501.30 L148.00 501.29 L148.50 501.27 L149.00 501.23 L149.50 501.18 L150.00 501.11 L150.50 501.02 L151.00 500.92 L151.50 500.81 L152.00 500.68 L152.50 500.54 L153.00 500.40 L153.50 500.24 L154.00 500.07 L154.50 499.89 L155.00 499.70 L155.50 499.50 L156.00 499.30 L156.50 499.09 L157.00 498.87 L157.50 498.65 L158.00 498.42 L158.50 498.19 L159.00 497.96 L159.50 497.72 L160.00 497.48 L160.50 497.24 L161.00 496.99 L161.50 496.75 L162.00 496.51 L162.50 496.27 L163.00 496.03 L163.50 495.79 L164.00 495.56 L164.50 495.33 L165.00 495.10 L165.50 494.88 L166.00 494.67 L166.50 494.46 L167.00 494.26 L167.50 494.05 L168.00 493.84 L168.50 493.62 L169.00 493.39 L169.50 493.15 L170.00 492.91 L170.50 492.67 L171.00 492.43 L171.50 492.18 L172.00 491.94 L172.50 491.70 L173.00 491.46 L173.50 491.22 L174.00 490.99 L174.50 490.76 L175.00 490.55 L175.50 490.34 L176.00 490.14 L176.50 489.95 L177.00 489.77 L177.50 489.61 L178.00 489.46 L178.50 489.32 L179.00 489.19 L179.50 489.07 L180.00 488.95 L180.50 488.84 L181.00 488.74 L181.50 488.64 L182.00 488.54 L182.50 488.45 L183.00 488.36 L183.50 488.27 L184.00 488.19 L184.50 488.11 L185.00 488.03 L185.50 487.96 L186.00 487.88 L186.50 487.81 L187.00 487.73 L187.50 487.66 L188.00 487.59 L188.50 487.51 L189.00 487.43 L189.50 487.36 L190.00 487.28 L190.50 487.19 L191.00 487.11 L191.50 487.02 L192.00 486.93 L192.50 486.83 L193.00 486.73 L193.50 486.62 L194.00 486.51 L194.50 486.39 L195.00 486.27 L195.50 486.14 L196.00 486.00 L196.50 485.85 L197.00 485.69 L197.50 485.52 L198.00 485.33 L198.50 485.13 L199.00 484.92 L199.50 484.71 L200.00 484.48 L200.50 484.24 L201.00 484.00 L201.50 483.74 L202.00 483.48 L202.50 483.22 L203.00 482.95 L203.50 482.67 L204.00 482.40 L204.50 482.11 L205.00 481.83 L205.50 481.54 L206.00 481.25 L206.50 480.96 L207.00 480.67 L207.50 480.39 L208.00 480.10 L208.50 479.82 L209.00 479.53 L209.50 479.26 L210.00 478.98 L210.50 478.69 L211.00 478.40 L211.50 478.10 L212.00 477.80 L212.50 477.49 L213.00 477.18 L213.50 476.86 L214.00 476.54 L214.50 476.22 L215.00 475.90 L215.50 475.57 L216.00 475.24 L216.50 474.91 L217.00 474.58 L217.50 474.25 L218.00 473.92 L218.50 473.59 L219.00 473.27 L219.50 472.94 L220.00 472.62 L220.50 472.30 L221.00 471.99 L221.50 471.68 L222.00 471.37 L222.50 471.07 L223.00 470.77 L223.50 470.48 L224.00 470.20 L224.50 469.92 L225.00 469.66 L225.50 469.40 L226.00 469.14 L226.50 468.87 L227.00 468.61 L227.50 468.35 L228.00 468.09 L228.50 467.82 L229.00 467.56 L229.50 467.30 L230.00 467.04 L230.50 466.78 L231.00 466.53 L231.50 466.27 L232.00 466.03 L232.50 465.78 L233.00 465.54 L233.50 465.30 L234.00 465.06 L234.50 464.84 L235.00 464.61 L235.50 464.40 L236.00 464.19 L236.50 463.98 L237.00 463.78 L237.50 463.59 L238.00 463.41 L238.50 463.24 L239.00 463.07 L239.50 462.91 L240.00 462.77 L240.50 462.63 L241.00 462.50 L241.50 462.38 L242.00 462.26 L242.50 462.14 L243.00 462.03 L243.50 461.91 L244.00 461.80 L244.50 461.69 L245.00 461.58 L245.50 461.48 L246.00 461.37 L246.50 461.27 L247.00 461.17 L247.50 461.08 L248.00 460.98 L248.50 460.89 L249.00 460.80 L249.50 460.71 L250.00 460.63 L250.50 460.54 L251.00 460.46 L251.50 460.38 L252.00 460.31 L252.50 460.23 L253.00 460.16 L253.50 460.09 L254.00 460.03 L254.50 459.96 L255.00 459.90 L255.50 459.84 L256.00 459.78 L256.50 459.73 L257.00 459.68 L257.50 459.63 L258.00 459.58 L258.50 459.54 L259.00 459.50 L259.50 459.46 L260.00 459.42 L260.50 459.38 L261.00 459.34 L261.50 459.30 L262.00 459.27 L262.50 459.23 L263.00 459.19 L263.50 459.16 L264.00 459.13 L264.50 459.10 L265.00 459.08 L265.50 459.05 L266.00 459.04 L266.50 459.02 L267.00 459.01 L267.50 459.00 L268.00 459.00 L268.50 459.00 L269.00 459.01 L269.50 459.02 L270.00 459.03 L270.50 459.04 L271.00 459.06 L271.50 459.08 L272.00 459.11 L272.50 459.13 L273.00 459.16 L273.50 459.20 L274.00 459.23 L274.50 459.27 L275.00 459.31 L275.50 459.35 L276.00 459.39 L276.50 459.43 L277.00 459.48 L277.50 459.53 L278.00 459.57 L278.50 459.62 L279.00 459.68 L279.50 459.73 L280.00 459.78 L280.50 459.84 L281.00 459.89 L281.50 459.94 L282.00 460.00 L282.50 460.06 L283.00 460.12 L283.50 460.19 L284.00 460.27 L284.50 460.35 L285.00 460.44 L285.50 460.53 L286.00 460.63 L286.50 460.73 L287.00 460.84 L287.50 460.95 L288.00 461.07 L288.50 461.19 L289.00 461.32 L289.50 461.45 L290.00 461.59 L290.50 461.73 L291.00 461.87 L291.50 462.02 L292.00 462.17 L292.50 462.32 L293.00 462.48 L293.50 462.65 L294.00 462.81 L294.50 462.98 L295.00 463.15 L295.50 463.33 L296.00 463.51 L296.50 463.69 L297.00 463.87 L297.50 464.07 L298.00 464.28 L298.50 464.49 L299.00 464.72 L299.50 464.96 L300.00 465.21 L300.50 465.47 L301.00 465.74 L301.50 466.02 L302.00 466.31 L302.50 466.61 L303.00 466.92 L303.50 467.23 L304.00 467.56 L304.50 467.89 L305.00 468.23 L305.50 468.58 L306.00 468.94 L306.50 469.30 L307.00 469.68 L307.50 470.05 L308.00 470.44 L308.50 470.83 L309.00 471.23 L309.50 471.63 L310.00 472.04 L310.50 472.46 L311.00 472.88 L311.50 473.30 L312.00 473.74 L312.50 474.17 L313.00 474.61 L313.50 475.05 L314.00 475.50 L314.50 475.95 L315.00 476.40 L315.50 476.86 L316.00 477.32 L316.50 477.79 L317.00 478.25 L317.50 478.72 L318.00 479.19 L318.50 479.68 L319.00 480.20 L319.50 480.74 L320.00 481.30 L320.50 481.89 L321.00 482.49 L321.50 483.11 L322.00 483.74 L322.50 484.40 L323.00 485.06 L323.50 485.74 L324.00 486.42 L324.50 487.12 L325.00 487.82 L325.50 488.54 L326.00 489.25 L326.50 489.97 L327.00 490.70 L327.50 491.42 L328.00 492.14 L328.50 492.87 L329.00 493.58 L329.50 494.30 L330.00 495.01 L330.50 495.71 L331.00 496.40 L331.50 497.09 L332.00 497.76 L332.50 498.42 L333.00 499.06 L333.50 499.69 L334.00 500.31 L334.50 500.90 L335.00 501.48 L335.50 502.03 L336.00 502.57 L336.50 503.10 L337.00 503.62 L337.50 504.13 L338.00 504.63 L338.50 505.12 L339.00 505.60 L339.50 506.07 L340.00 506.54 L340.50 507.00 L341.00 507.45 L341.50 507.90 L342.00 508.34 L342.50 508.78 L343.00 509.22 L343.50 509.65 L344.00 510.08 L344.50 510.51 L345.00 510.94 L345.50 511.37 L346.00 511.81 L346.50 512.24 L347.00 512.67 L347.50 513.11 L348.00 513.55 L348.50 514.00 L349.00 514.45 L349.50 514.90 L350.00 515.36 L350.50 515.83 L351.00 516.31 L351.50 516.79 L352.00 517.29 L352.50 517.79 L353.00 518.31 L353.50 518.83 L354.00 519.37 L354.50 519.91 L355.00 520.48 L355.50 521.05 L356.00 521.64 L356.50 522.25 L357.00 522.90 L357.50 523.61 L358.00 524.37 L358.50 525.16 L359.00 525.99 L359.50 526.84 L360.00 527.71 L360.50 528.60 L361.00 529.50 L361.50 530.40 L362.00 531.30 L362.50 532.18 L363.00 533.06 L363.50 533.91 L364.00 534.73 L364.50 535.52 L365.00 536.27 L365.50 536.97 L366.00 537.62 L366.50 538.21 L367.00 538.74 L367.50 539.20 L368.00 539.62 L368.50 540.02 L369.00 540.41 L369.50 540.80 L370.00 541.17 L370.50 541.54 L371.00 541.89 L371.50 542.24 L372.00 542.58 L372.50 542.90 L373.00 543.23 L373.50 543.54 L374.00 543.84 L374.50 544.14 L375.00 544.43 L375.50 544.72 L376.00 544.99 L376.50 545.27 L377.00 545.53 L377.50 545.79 L378.00 546.04 L378.50 546.29 L379.00 546.54 L379.50 546.78 L380.00 547.01 L380.50 547.24 L381.00 547.47 L381.50 547.70 L382.00 547.92 L382.50 548.14 L383.00 548.35 L383.50 548.56 L384.00 548.78 L384.50 548.98 L385.00 549.19 L385.50 549.40 L386.00 549.61 L386.50 549.81 L387.00 550.01 L387.50 550.22 L388.00 550.42 L388.50 550.63 L389.00 550.83 L389.50 551.04 L390.00 551.25 L390.50 551.45 L391.00 551.65 L391.50 551.85 L392.00 552.04 L392.50 552.24 L393.00 552.43 L393.50 552.62 L394.00 552.81 L394.50 552.99 L395.00 553.17 L395.50 553.36 L396.00 553.54 L396.50 553.71 L397.00 553.89 L397.50 554.06 L398.00 554.23 L398.50 554.40 L399.00 554.57 L399.50 554.74 L400.00 554.90 L400.50 555.07 L401.00 555.23 L401.50 555.39 L402.00 555.55 L402.50 555.71 L403.00 555.86 L403.50 556.02 L404.00 556.17 L404.50 556.33 L405.00 556.48 L405.50 556.63 L406.00 556.78 L406.50 556.93 L407.00 557.08 L407.50 557.22 L408.00 557.37 L408.50 557.51 L409.00 557.66 L409.50 557.80 L410.00 557.95 L410.50 558.10 L411.00 558.26 L411.50 558.42 L412.00 558.58 L412.50 558.75 L413.00 558.92 L413.50 559.09 L414.00 559.25 L414.50 559.42 L415.00 559.59 L415.50 559.75 L416.00 559.91 L416.50 560.06 L417.00 560.21 L417.50 560.35 L418.00 560.48 L418.50 560.60 L419.00 560.72 L419.50 560.83 L420.00 560.92 L420.50 561.00 L421.00 561.07 L421.50 561.13 L422.00 561.17 L422.50 561.19 L423.00 561.20 L423.50 561.19 L424.00 561.17 L424.50 561.13 L425.00 561.07 L425.50 561.00 L426.00 560.92 L426.50 560.82 L427.00 560.72 L427.50 560.60 L428.00 560.47 L428.50 560.34 L429.00 560.19 L429.50 560.04 L430.00 559.88 L430.50 559.72 L431.00 559.55 L431.50 559.37 L432.00 559.19 L432.50 559.01 L433.00 558.83 L433.50 558.64 L434.00 558.46 L434.50 558.27 L435.00 558.09 L435.50 557.91 L436.00 557.73 L436.50 557.56 L437.00 557.39 L437.50 557.22 L438.00 557.06 L438.50 556.91 L439.00 556.76 L439.50 556.63 L440.00 556.50 L440.50 556.38 L441.00 556.25 L441.50 556.13 L442.00 556.00 L442.50 555.87 L443.00 555.75 L443.50 555.62 L444.00 555.49 L444.50 555.36 L445.00 555.23 L445.50 555.10 L446.00 554.98 L446.50 554.85 L447.00 554.72 L447.50 554.59 L448.00 554.47 L448.50 554.34 L449.00 554.22 L449.50 554.10 L450.00 553.97 L450.50 553.85 L451.00 553.74 L451.50 553.62 L452.00 553.50 L452.50 553.39 L453.00 553.28 L453.50 553.17 L454.00 553.06 L454.50 552.96 L455.00 552.86 L455.50 552.76 L456.00 552.67 L456.50 552.58 L457.00 552.49 L457.50 552.40 L458.00 552.32 L458.50 552.24 L459.00 552.17 L459.50 552.10 L460.00 552.03 L460.50 551.97 L461.00 551.91 L461.50 551.86 L462.00 551.80 L462.50 551.75 L463.00 551.69 L463.50 551.64 L464.00 551.59 L464.50 551.53 L465.00 551.48 L465.50 551.43 L466.00 551.38 L466.50 551.33 L467.00 551.27 L467.50 551.22 L468.00 551.17 L468.50 551.12 L469.00 551.07 L469.50 551.02 L470.00 550.97 L470.50 550.92 L471.00 550.87 L471.50 550.83 L472.00 550.78 L472.50 550.73 L473.00 550.68 L473.50 550.64 L474.00 550.59 L474.50 550.55 L475.00 550.50 L475.50 550.46 L476.00 550.41 L476.50 550.37 L477.00 550.33 L477.50 550.28 L478.00 550.24 L478.50 550.20 L479.00 550.16 L479.50 550.12 L480.00 550.08 L480.50 550.04 L481.00 550.00 L481.50 549.97 L482.00 549.93 L482.50 549.89 L483.00 549.86 L483.50 549.82 L484.00 549.79 L484.50 549.75 L485.00 549.72 L485.50 549.69 L486.00 549.66 L486.50 549.63 L487.00 549.60 L487.50 549.57 L488.00 549.54 L488.50 549.51 L489.00 549.48 L489.50 549.46 L490.00 549.43 L490.50 549.41 L491.00 549.38 L491.50 549.36 L492.00 549.34 L492.50 549.32 L493.00 549.30 L493.50 549.28 L494.00 549.26 L494.50 549.24 L495.00 549.23 L495.50 549.21 L496.00 549.20 L496.50 549.18 L497.00 549.17 L497.50 549.16 L498.00 549.15 L498.50 549.14 L499.00 549.13 L499.50 549.12 L500.00 549.12 L500.50 549.11 L501.00 549.11 L501.50 549.10 L502.00 549.10 L502.50 549.10 L503.00 549.10 L503.50 549.10 L504.00 549.10 L504.50 549.11 L505.00 549.11 L505.50 549.12 L506.00 549.12 L506.50 549.13 L507.00 549.14 L507.50 549.15 L508.00 549.16 L508.50 549.18 L509.00 549.19 L509.50 549.20 L510.00 549.22 L510.50 549.24 L511.00 549.25 L511.50 549.27 L512.00 549.29 L512.50 549.31 L513.00 549.33 L513.50 549.36 L514.00 549.38 L514.50 549.40 L515.00 549.43 L515.50 549.45 L516.00 549.48 L516.50 549.50 L517.00 549.53 L517.50 549.56 L518.00 549.59 L518.50 549.62 L519.00 549.65 L519.50 549.68 L520.00 549.71 L520.50 549.74 L521.00 549.78 L521.50 549.81 L522.00 549.84 L522.50 549.88 L523.00 549.91 L523.50 549.95 L524.00 549.98 L524.50 550.02 L525.00 550.06 L525.50 550.09 L526.00 550.13 L526.50 550.17 L527.00 550.21 L527.50 550.24 L528.00 550.28 L528.50 550.32 L529.00 550.36 L529.50 550.40 L530.00 550.44 L530.50 550.48 L531.00 550.52 L531.50 550.56 L532.00 550.60 L532.50 550.64 L533.00 550.68 L533.50 550.73 L534.00 550.77 L534.50 550.82 L535.00 550.87 L535.50 550.92 L536.00 550.97 L536.50 551.03 L537.00 551.09 L537.50 551.16 L538.00 551.22 L538.50 551.29 L539.00 551.36 L539.50 551.43 L540.00 551.51 L540.50 551.58 L541.00 551.66 L541.50 551.74 L542.00 551.82 L542.50 551.91 L543.00 551.99 L543.50 552.08 L544.00 552.17 L544.50 552.26 L545.00 552.35 L545.50 552.45 L546.00 552.54 L546.50 552.64 L547.00 552.73 L547.50 552.83 L548.00 552.93 L548.50 553.03 L549.00 553.13 L549.50 553.23 L550.00 553.33 L550.50 553.43 L551.00 553.54 L551.50 553.64 L552.00 553.74 L552.50 553.85 L553.00 553.95 L553.50 554.06 L554.00 554.16 L554.50 554.27 L555.00 554.37 L555.50 554.48 L556.00 554.58 L556.50 554.68 L557.00 554.79 L557.50 554.89 L558.00 554.99 L558.50 555.10 L559.00 555.20 L559.50 555.30 L560.00 555.40 L560.50 555.51 L561.00 555.62 L561.50 555.75 L562.00 555.88 L562.50 556.02 L563.00 556.16 L563.50 556.31 L564.00 556.46 L564.50 556.61 L565.00 556.76 L565.50 556.90 L566.00 557.05 L566.50 557.19 L567.00 557.32 L567.50 557.44 L568.00 557.56 L568.50 557.66 L569.00 557.76 L569.50 557.84 L570.00 557.90 L570.50 557.95 L571.00 557.99 L571.50 558.00 L572.00 557.99 L572.50 557.97 L573.00 557.94 L573.50 557.89 L574.00 557.84 L574.50 557.77 L575.00 557.69 L575.50 557.60 L576.00 557.51 L576.50 557.41 L577.00 557.30 L577.50 557.19 L578.00 557.08 L578.50 556.97 L579.00 556.86 L579.50 556.75 L580.00 556.64 L580.50 556.54 L581.00 556.44 L581.50 556.34 L582.00 556.25 L582.50 556.18 L583.00 556.11 L583.50 556.05 L584.00 556.00 L584.50 555.96 L585.00 555.92 L585.50 555.88 L586.00 555.84 L586.50 555.80 L587.00 555.76 L587.50 555.72 L588.00 555.68 L588.50 555.64 L589.00 555.61 L589.50 555.57 L590.00 555.54 L590.50 555.50 L591.00 555.47 L591.50 555.44 L592.00 555.41 L592.50 555.38 L593.00 555.36 L593.50 555.33 L594.00 555.31 L594.50 555.29 L595.00 555.27 L595.50 555.25 L596.00 555.24 L596.50 555.23 L597.00 555.22 L597.50 555.21 L598.00 555.20 L598.50 555.20 L599.00 555.20 L599.50 555.21 L600.00 555.22 L600.50 555.24 L601.00 555.26 L601.50 555.29 L602.00 555.33 L602.50 555.37 L603.00 555.42 L603.50 555.47 L604.00 555.53 L604.50 555.59 L605.00 555.66 L605.50 555.73 L606.00 555.81 L606.50 555.89 L607.00 555.97 L607.50 556.06 L608.00 556.15 L608.50 556.24 L609.00 556.34 L609.50 556.44 L610.00 556.55 L610.50 556.66 L611.00 556.77 L611.50 556.88 L612.00 556.99 L612.50 557.11 L613.00 557.23 L613.50 557.35 L614.00 557.47 L614.50 557.60 L615.00 557.72 L615.50 557.85 L616.00 557.98 L616.50 558.10 L617.00 558.23 L617.50 558.36 L618.00 558.49 L618.50 558.62 L619.00 558.75 L619.50 558.88 L620.00 559.02 L620.50 559.16 L621.00 559.32 L621.50 559.48 L622.00 559.64 L622.50 559.82 L623.00 560.00 L623.50 560.19 L624.00 560.38 L624.50 560.58 L625.00 560.79 L625.50 561.00 L626.00 561.22 L626.50 561.44 L627.00 561.67 L627.50 561.91 L628.00 562.14 L628.50 562.39 L629.00 562.63 L629.50 562.89 L630.00 563.14 L630.50 563.40 L631.00 563.66 L631.50 563.93 L632.00 564.19 L632.50 564.47 L633.00 564.74 L633.50 565.02 L634.00 565.29 L634.50 565.57 L635.00 565.86 L635.50 566.14 L636.00 566.43 L636.50 566.73 L637.00 567.03 L637.50 567.34 L638.00 567.65 L638.50 567.97 L639.00 568.30 L639.50 568.63 L640.00 568.97 L640.50 569.32 L641.00 569.68 L641.50 570.05 L642.00 570.43 L642.50 570.82 L643.00 571.21 L643.50 571.62 L644.00 572.04 L644.50 572.47 L645.00 572.91 L645.50 573.36 L646.00 573.83 L646.50 574.31 L647.00 574.80 L647.50 575.30 L648.00 575.83 L648.50 576.39 L649.00 576.98 L649.50 577.59 L650.00 578.24 L650.50 578.91 L651.00 579.60 L651.50 580.32 L652.00 581.07 L652.50 581.83 L653.00 582.62 L653.50 583.44 L654.00 584.27 L654.50 585.13 L655.00 586.00 L655.50 586.89 L656.00 587.80 L656.50 588.73 L657.00 589.70 L657.50 590.91 L658.00 592.33 L658.50 593.89 L659.00 595.52 L659.50 597.14 L660.00 598.69 L660.50 600.09 L661.00 601.25 L661.50 602.12 L662.00 602.61 L662.50 602.70 L663.00 602.70 L663.50 602.70 L664.00 602.70 L664.50 602.70 L665.00 602.70 L665.50 602.70 L666.00 602.70 L666.50 602.70 L667.00 602.70 L667.50 602.70 L668.00 602.70 L668.50 602.70 L669.00 602.70 L669.50 602.70 L670.00 602.70 L670.50 602.70 L671.00 602.70 L671.50 602.70" stroke="#00ee00" stroke-width="1.6"/>
<path d="M139.50 497.00 L140.00 497.40 L140.50 497.79 L141.00 498.18 L141.50 498.56 L142.00 498.93 L142.50 499.28 L143.00 499.61 L143.50 499.92 L144.00 500.21 L144.50 500.47 L145.00 500.71 L145.50 500.90 L146.00 501.06 L146.50 501.19 L147.00 501.27 L147.50 501.30 L148.00 501.29 L148.50 501.27 L149.00 501.23 L149.50 501.18 L150.00 501.11 L150.50 501.02 L151.00 500.92 L151.50 500.81 L152.00 500.68 L152.50 500.54 L153.00 500.40 L153.50 500.24 L154.00 500.07 L154.50 499.89 L155.00 499.70 L155.50 499.50 L156.00 499.30 L156.50 499.09 L157.00 498.87 L157.50 498.65 L158.00 498.42 L158.50 498.19 L159.00 497.96 L159.50 497.72 L160.00 497.48 L160.50 497.24 L161.00 496.99 L161.50 496.75 L162.00 496.51 L162.50 496.27 L163.00 496.03 L163.50 495.79 L164.00 495.56 L164.50 495.33 L165.00 495.10 L165.50 494.88 L166.00 494.67 L166.50 494.46 L167.00 494.26 L167.50 494.05 L168.00 493.84 L168.50 493.62 L169.00 493.39 L169.50 493.15 L170.00 492.91 L170.50 492.67 L171.00 492.43 L171.50 492.18 L172.00 491.94 L172.50 491.70 L173.00 491.46 L173.50 491.22 L174.00 490.99 L174.50 490.76 L175.00 490.55 L175.50 490.34 L176.00 490.14 L176.50 489.95 L177.00 489.77 L177.50 489.61 L178.00 489.46 L178.50 489.32 L179.00 489.19 L179.50 489.07 L180.00 488.95 L180.50 488.84 L181.00 488.74 L181.50 488.64 L182.00 488.54 L182.50 488.45 L183.00 488.36 L183.50 488.27 L184.00 488.19 L184.50 488.11 L185.00 488.03 L185.50 487.96 L186.00 487.88 L186.50 487.81 L187.00 487.73 L187.50 487.66 L188.00 487.59 L188.50 487.51 L189.00 487.43 L189.50 487.36 L190.00 487.28 L190.50 487.19 L191.00 487.11 L191.50 487.02 L192.00 486.93 L192.50 486.83 L193.00 486.73 L193.50 486.62 L194.00 486.51 L194.50 486.39 L195.00 486.27 L195.50 486.14 L196.00 486.00 L196.50 485.85 L197.00 485.69 L197.50 485.52 L198.00 485.33 L198.50 485.13 L199.00 484.92 L199.50 484.71 L200.00 484.48 L200.50 484.24 L201.00 484.00 L201.50 483.74 L202.00 483.48 L202.50 483.22 L203.00 482.95 L203.50 482.67 L204.00 482.40 L204.50 482.11 L205.00 481.83 L205.50 481.54 L206.00 481.25 L206.50 480.96 L207.00 480.67 L207.50 480.39 L208.00 480.10 L208.50 479.82 L209.00 479.53 L209.50 479.26 L210.00 478.98 L210.50 478.69 L211.00 478.40 L211.50 478.10 L212.00 477.80 L212.50 477.49 L213.00 477.18 L213.50 476.86 L214.00 476.54 L214.50 476.22 L215.00 475.90 L215.50 475.57 L216.00 475.24 L216.50 474.91 L217.00 474.58 L217.50 474.25 L218.00 473.92 L218.50 473.59 L219.00 473.27 L219.50 472.94 L220.00 472.62 L220.50 472.30 L221.00 471.99 L221.50 471.68 L222.00 471.37 L222.50 471.07 L223.00 470.77 L223.50 470.48 L224.00 470.20 L224.50 469.92 L225.00 469.66 L225.50 469.40 L226.00 469.14 L226.50 468.87 L227.00 468.61 L227.50 468.35 L228.00 468.09 L228.50 467.82 L229.00 467.56 L229.50 467.30 L230.00 467.04 L230.50 466.78 L231.00 466.53 L231.50 466.27 L232.00 466.03 L232.50 465.78 L233.00 465.54 L233.50 465.30 L234.00 465.06 L234.50 464.84 L235.00 464.61 L235.50 464.40 L236.00 464.19 L236.50 463.98 L237.00 463.78 L237.50 463.59 L238.00 463.41 L238.50 463.24 L239.00 463.07 L239.50 462.91 L240.00 462.77 L240.50 462.63 L241.00 462.50 L241.50 462.38 L242.00 462.26 L242.50 462.14 L243.00 462.03 L243.50 461.91 L244.00 461.80 L244.50 461.69 L245.00 461.58 L245.50 461.48 L246.00 461.37 L246.50 461.27 L247.00 461.17 L247.50 461.08 L248.00 460.98 L248.50 460.89 L249.00 460.80 L249.50 460.71 L250.00 460.63 L250.50 460.54 L251.00 460.46 L251.50 460.38 L252.00 460.31 L252.50 460.23 L253.00 460.16 L253.50 460.09 L254.00 460.03 L254.50 459.96 L255.00 459.90 L255.50 459.84 L256.00 459.78 L256.50 459.73 L257.00 459.68 L257.50 459.63 L258.00 459.58 L258.50 459.54 L259.00 459.50 L259.50 459.46 L260.00 459.42 L260.50 459.38 L261.00 459.34 L261.50 459.30 L262.00 459.27 L262.50 459.23 L263.00 459.19 L263.50 459.16 L264.00 459.13 L264.50 459.10 L265.00 459.08 L265.50 459.05 L266.00 459.04 L266.50 459.02 L267.00 459.01 L267.50 459.00 L268.00 459.00 L268.50 459.00 L269.00 459.01 L269.50 459.02 L270.00 459.03 L270.50 459.04 L271.00 459.06 L271.50 459.08 L272.00 459.11 L272.50 459.13 L273.00 459.16 L273.50 459.20 L274.00 459.23 L274.50 459.27 L275.00 459.31 L275.50 459.35 L276.00 459.39 L276.50 459.43 L277.00 459.48 L277.50 459.53 L278.00 459.57 L278.50 459.62 L279.00 459.68 L279.50 459.73 L280.00 459.78 L280.50 459.84 L281.00 459.89 L281.50 459.94 L282.00 460.00 L282.50 460.06 L283.00 460.12 L283.50 460.19 L284.00 460.27 L284.50 460.35 L285.00 460.44 L285.50 460.53 L286.00 460.63 L286.50 460.73 L287.00 460.84 L287.50 460.95 L288.00 461.07 L288.50 461.19 L289.00 461.32 L289.50 461.45 L290.00 461.59 L290.50 461.73 L291.00 461.87 L291.50 462.02 L292.00 462.17 L292.50 462.32 L293.00 462.48 L293.50 462.65 L294.00 462.81 L294.50 462.98 L295.00 463.15 L295.50 463.33 L296.00 463.51 L296.50 463.69 L297.00 463.87 L297.50 464.07 L298.00 464.28 L298.50 464.49 L299.00 464.72 L299.50 464.96 L300.00 465.21 L300.50 465.47 L301.00 465.74 L301.50 466.02 L302.00 466.31 L302.50 466.61 L303.00 466.92 L303.50 467.23 L304.00 467.56 L304.50 467.89 L305.00 468.23 L305.50 468.58 L306.00 468.94 L306.50 469.30 L307.00 469.68 L307.50 470.05 L308.00 470.44 L308.50 470.83 L309.00 471.23 L309.50 471.63 L310.00 472.04 L310.50 472.46 L311.00 472.88 L311.50 473.30 L312.00 473.74 L312.50 474.17 L313.00 474.61 L313.50 475.05 L314.00 475.50 L314.50 475.95 L315.00 476.40 L315.50 476.86 L316.00 477.32 L316.50 477.79 L317.00 478.25 L317.50 478.72 L318.00 479.19 L318.50 479.68 L319.00 480.20 L319.50 480.74 L320.00 481.30 L320.50 481.89 L321.00 482.49 L321.50 483.11 L322.00 483.74 L322.50 484.40 L323.00 485.06 L323.50 485.74 L324.00 486.42 L324.50 487.12 L325.00 487.82 L325.50 488.54 L326.00 489.25 L326.50 489.97 L327.00 490.70 L327.50 491.42 L328.00 492.14 L328.50 492.87 L329.00 493.58 L329.50 494.30 L330.00 495.01 L330.50 495.71 L331.00 496.40 L331.50 497.09 L332.00 497.76 L332.50 498.42 L333.00 499.06 L333.50 499.69 L334.00 500.31 L334.50 500.90 L335.00 501.48 L335.50 502.03 L336.00 502.57 L336.50 503.10 L337.00 503.62 L337.50 504.13 L338.00 504.63 L338.50 505.12 L339.00 505.60 L339.50 506.07 L340.00 506.54 L340.50 507.00 L341.00 507.45 L341.50 507.90 L342.00 508.34 L342.50 508.78 L343.00 509.22 L343.50 509.65 L344.00 510.08 L344.50 510.51 L345.00 510.94 L345.50 511.37 L346.00 511.81 L346.50 512.24 L347.00 512.67 L347.50 513.11 L348.00 513.55 L348.50 514.00 L349.00 514.45 L349.50 514.90 L350.00 515.36 L350.50 515.83 L351.00 516.31 L351.50 516.79 L352.00 517.29 L352.50 517.79 L353.00 518.31 L353.50 518.83 L354.00 519.37 L354.50 519.91 L355.00 520.48 L355.50 521.05 L356.00 521.64 L356.50 522.25 L357.00 522.90 L357.50 523.61 L358.00 524.37 L358.50 525.16 L359.00 525.99 L359.50 526.84 L360.00 527.71 L360.50 528.60 L361.00 529.50 L361.50 530.40 L362.00 531.30 L362.50 532.18 L363.00 533.06 L363.50 533.91 L364.00 534.73 L364.50 535.52 L365.00 536.27 L365.50 536.97 L366.00 537.62 L366.50 538.21 L367.00 538.74 L367.50 539.20 L368.00 539.62 L368.50 540.02 L369.00 540.41 L369.50 540.80 L370.00 541.17 L370.50 541.54 L371.00 541.89 L371.50 542.24 L372.00 542.58 L372.50 542.90 L373.00 543.23 L373.50 543.54 L374.00 543.84 L374.50 544.14 L375.00 544.43 L375.50 544.72 L376.00 544.99 L376.50 545.27 L377.00 545.53 L377.50 545.79 L378.00 546.04 L378.50 546.29 L379.00 546.54 L379.50 546.78 L380.00 547.01 L380.50 547.24 L381.00 547.47 L381.50 547.70 L382.00 547.92 L382.50 548.14 L383.00 548.35 L383.50 548.56 L384.00 548.78 L384.50 548.98 L385.00 549.19 L385.50 549.40 L386.00 549.61 L386.50 549.81 L387.00 550.01 L387.50 550.22 L388.00 550.42 L388.50 550.63 L389.00 550.83 L389.50 551.04 L390.00 551.25 L390.50 551.45 L391.00 551.65 L391.50 551.85 L392.00 552.04 L392.50 552.24 L393.00 552.43 L393.50 552.62 L394.00 552.81 L394.50 552.99 L395.00 553.17 L395.50 553.36 L396.00 553.54 L396.50 553.71 L397.00 553.89 L397.50 554.06 L398.00 554.23 L398.50 554.40 L399.00 554.57 L399.50 554.74 L400.00 554.90 L400.50 555.07 L401.00 555.23 L401.50 555.39 L402.00 555.55 L402.50 555.71 L403.00 555.86 L403.50 556.02 L404.00 556.17 L404.50 556.33 L405.00 556.48 L405.50 556.62 L406.00 556.77 L406.50 556.91 L407.00 557.04 L407.50 557.17 L408.00 557.29 L408.50 557.39 L409.00 557.48 L409.50 557.53 L410.00 557.57 L410.50 557.57 L411.00 557.53 L411.50 557.46 L412.00 557.34 L412.50 557.18 L413.00 556.99 L413.50 556.78 L414.00 556.56 L414.50 556.35 L415.00 556.18 L415.50 556.05 L416.00 555.98 L416.50 556.00 L417.00 556.10 L417.50 556.29 L418.00 556.57 L418.50 556.92 L419.00 557.33 L419.50 557.79 L420.00 558.26 L420.50 558.73 L421.00 559.18 L421.50 559.60 L422.00 559.96 L422.50 560.26 L423.00 560.50 L423.50 560.68 L424.00 560.80 L424.50 560.88 L425.00 560.90 L425.50 560.89 L426.00 560.85 L426.50 560.78 L427.00 560.68 L427.50 560.57 L428.00 560.45 L428.50 560.30 L429.00 560.14 L429.50 559.97 L430.00 559.77 L430.50 559.55 L431.00 559.29 L431.50 558.99 L432.00 558.64 L432.50 558.23 L433.00 557.72 L433.50 557.10 L434.00 556.36 L434.50 555.45 L435.00 554.37 L435.50 553.10 L436.00 551.62 L436.50 549.94 L437.00 548.06 L437.50 546.00 L438.00 543.81 L438.50 541.51 L439.00 539.16 L439.50 536.81 L440.00 534.50 L440.50 532.27 L441.00 530.18 L441.50 528.25 L442.00 526.52 L442.50 525.03 L443.00 523.78 L443.50 522.79 L444.00 522.09 L444.50 521.68 L445.00 521.56 L445.50 521.73 L446.00 522.19 L446.50 522.92 L447.00 523.93 L447.50 525.18 L448.00 526.65 L448.50 528.33 L449.00 530.16 L449.50 532.11 L450.00 534.14 L450.50 536.18 L451.00 538.17 L451.50 540.06 L452.00 541.77 L452.50 543.26 L453.00 544.45 L453.50 545.31 L454.00 545.81 L454.50 545.93 L455.00 545.68 L455.50 545.09 L456.00 544.19 L456.50 543.03 L457.00 541.66 L457.50 540.15 L458.00 538.57 L458.50 536.96 L459.00 535.39 L459.50 533.91 L460.00 532.55 L460.50 531.36 L461.00 530.37 L461.50 529.59 L462.00 529.05 L462.50 528.76 L463.00 528.72 L463.50 528.93 L464.00 529.37 L464.50 530.04 L465.00 530.91 L465.50 531.95 L466.00 533.10 L466.50 534.30 L467.00 535.49 L467.50 536.56 L468.00 537.41 L468.50 537.90 L469.00 537.91 L469.50 537.31 L470.00 536.03 L470.50 534.04 L471.00 531.35 L471.50 528.05 L472.00 524.26 L472.50 520.13 L473.00 515.79 L473.50 511.37 L474.00 506.98 L474.50 502.71 L475.00 498.63 L475.50 494.80 L476.00 491.26 L476.50 488.04 L477.00 485.16 L477.50 482.66 L478.00 480.53 L478.50 478.79 L479.00 477.45 L479.50 476.51 L480.00 475.97 L480.50 475.84 L481.00 476.12 L481.50 476.81 L482.00 477.90 L482.50 479.40 L483.00 481.28 L483.50 483.55 L484.00 486.19 L484.50 489.19 L485.00 492.52 L485.50 496.16 L486.00 500.07 L486.50 504.20 L487.00 508.50 L487.50 512.87 L488.00 517.24 L488.50 521.47 L489.00 525.43 L489.50 528.96 L490.00 531.92 L490.50 534.16 L491.00 535.61 L491.50 536.23 L492.00 536.03 L492.50 535.11 L493.00 533.58 L493.50 531.56 L494.00 529.21 L494.50 526.63 L495.00 523.95 L495.50 521.24 L496.00 518.58 L496.50 516.04 L497.00 513.67 L497.50 511.50 L498.00 509.57 L498.50 507.90 L499.00 506.52 L499.50 505.43 L500.00 504.64 L500.50 504.17 L501.00 504.00 L501.50 504.14 L502.00 504.57 L502.50 505.28 L503.00 506.23 L503.50 507.39 L504.00 508.68 L504.50 510.03 L505.00 511.32 L505.50 512.41 L506.00 513.14 L506.50 513.34 L507.00 512.88 L507.50 511.64 L508.00 509.64 L508.50 506.92 L509.00 503.64 L509.50 499.96 L510.00 496.05 L510.50 492.07 L511.00 488.14 L511.50 484.36 L512.00 480.80 L512.50 477.52 L513.00 474.56 L513.50 471.94 L514.00 469.68 L514.50 467.80 L515.00 466.30 L515.50 465.20 L516.00 464.49 L516.50 464.19 L517.00 464.28 L517.50 464.78 L518.00 465.69 L518.50 466.99 L519.00 468.68 L519.50 470.77 L520.00 473.25 L520.50 476.10 L521.00 479.31 L521.50 482.88 L522.00 486.78 L522.50 490.98 L523.00 495.45 L523.50 500.15 L524.00 505.03 L524.50 510.00 L525.00 514.99 L525.50 519.89 L526.00 524.57 L526.50 528.90 L527.00 532.73 L527.50 535.93 L528.00 538.38 L528.50 540.02 L529.00 540.79 L529.50 540.71 L530.00 539.83 L530.50 538.24 L531.00 536.04 L531.50 533.34 L532.00 530.27 L532.50 526.94 L533.00 523.47 L533.50 519.96 L534.00 516.50 L534.50 513.15 L535.00 509.98 L535.50 507.04 L536.00 504.37 L536.50 502.00 L537.00 499.95 L537.50 498.25 L538.00 496.92 L538.50 495.95 L539.00 495.36 L539.50 495.15 L540.00 495.31 L540.50 495.86 L541.00 496.77 L541.50 498.03 L542.00 499.63 L542.50 501.53 L543.00 503.71 L543.50 506.10 L544.00 508.64 L544.50 511.24 L545.00 513.79 L545.50 516.15 L546.00 518.19 L546.50 519.76 L547.00 520.75 L547.50 521.09 L548.00 520.78 L548.50 519.88 L549.00 518.49 L549.50 516.74 L550.00 514.76 L550.50 512.67 L551.00 510.58 L551.50 508.57 L552.00 506.71 L552.50 505.03 L553.00 503.57 L553.50 502.36 L554.00 501.41 L554.50 500.75 L555.00 500.37 L555.50 500.28 L556.00 500.49 L556.50 500.99 L557.00 501.78 L557.50 502.87 L558.00 504.24 L558.50 505.88 L559.00 507.79 L559.50 509.94 L560.00 512.33 L560.50 514.94 L561.00 517.72 L561.50 520.67 L562.00 523.73 L562.50 526.86 L563.00 530.01 L563.50 533.14 L564.00 536.16 L564.50 539.03 L565.00 541.69 L565.50 544.07 L566.00 546.14 L566.50 547.86 L567.00 549.22 L567.50 550.23 L568.00 550.88 L568.50 551.21 L569.00 551.25 L569.50 551.02 L570.00 550.57 L570.50 549.92 L571.00 549.10 L571.50 548.14 L572.00 547.07 L572.50 545.90 L573.00 544.67 L573.50 543.39 L574.00 542.08 L574.50 540.76 L575.00 539.44 L575.50 538.13 L576.00 536.86 L576.50 535.63 L577.00 534.46 L577.50 533.35 L578.00 532.32 L578.50 531.37 L579.00 530.51 L579.50 529.75 L580.00 529.09 L580.50 528.54 L581.00 528.09 L581.50 527.76 L582.00 527.55 L582.50 527.45 L583.00 527.47 L583.50 527.60 L584.00 527.85 L584.50 528.22 L585.00 528.69 L585.50 529.26 L586.00 529.92 L586.50 530.69 L587.00 531.53 L587.50 532.46 L588.00 533.45 L588.50 534.50 L589.00 535.60 L589.50 536.74 L590.00 537.91 L590.50 539.09 L591.00 540.27 L591.50 541.44 L592.00 542.58 L592.50 543.69 L593.00 544.74 L593.50 545.73 L594.00 546.65 L594.50 547.49 L595.00 548.24 L595.50 548.91 L596.00 549.49 L596.50 549.97 L597.00 550.37 L597.50 550.69 L598.00 550.93 L598.50 551.09 L599.00 551.19 L599.50 551.24 L600.00 551.24 L600.50 551.21 L601.00 551.14 L601.50 551.05 L602.00 550.95 L602.50 550.84 L603.00 550.72 L603.50 550.61 L604.00 550.50 L604.50 550.40 L605.00 550.32 L605.50 550.26 L606.00 550.21 L606.50 550.19 L607.00 550.19 L607.50 550.21 L608.00 550.25 L608.50 550.32 L609.00 550.41 L609.50 550.52 L610.00 550.65 L610.50 550.79 L611.00 550.96 L611.50 551.13 L612.00 551.32 L612.50 551.52 L613.00 551.72 L613.50 551.93 L614.00 552.15 L614.50 552.36 L615.00 552.57 L615.50 552.78 L616.00 552.98 L616.50 553.18 L617.00 553.37 L617.50 553.56 L618.00 553.74 L618.50 553.92 L619.00 554.09 L619.50 554.25 L620.00 554.42 L620.50 554.58 L621.00 554.75 L621.50 554.93 L622.00 555.11 L622.50 555.29 L623.00 555.48 L623.50 555.67 L624.00 555.88 L624.50 556.09 L625.00 556.30 L625.50 556.53 L626.00 556.76 L626.50 557.00 L627.00 557.25 L627.50 557.51 L628.00 557.78 L628.50 558.06 L629.00 558.34 L629.50 558.63 L630.00 558.93 L630.50 559.24 L631.00 559.55 L631.50 559.87 L632.00 560.20 L632.50 560.54 L633.00 560.88 L633.50 561.22 L634.00 561.57 L634.50 561.92 L635.00 562.28 L635.50 562.64 L636.00 563.01 L636.50 563.38 L637.00 563.76 L637.50 564.14 L638.00 564.54 L638.50 564.93 L639.00 565.33 L639.50 565.74 L640.00 566.16 L640.50 566.58 L641.00 567.01 L641.50 567.44 L642.00 567.89 L642.50 568.33 L643.00 568.79 L643.50 569.26 L644.00 569.73 L644.50 570.21 L645.00 570.70 L645.50 571.19 L646.00 571.70 L646.50 572.21 L647.00 572.74 L647.50 573.28 L648.00 573.83 L648.50 574.41 L649.00 575.02 L649.50 575.65 L650.00 576.30 L650.50 576.97 L651.00 577.67 L651.50 578.39 L652.00 579.12 L652.50 579.88 L653.00 580.65 L653.50 581.44 L654.00 582.25 L654.50 583.08 L655.00 583.92 L655.50 584.78 L656.00 585.65 L656.50 586.54 L657.00 587.46 L657.50 588.59 L658.00 589.91 L658.50 591.37 L659.00 592.87 L659.50 594.37 L660.00 595.79 L660.50 597.06 L661.00 598.12 L661.50 598.91 L662.00 599.36 L662.50 599.45 L663.00 599.45 L663.50 599.46 L664.00 599.47 L664.50 599.47 L665.00 599.48 L665.50 599.48 L666.00 599.49 L666.50 599.49 L667.00 599.49 L667.50 599.49 L668.00 599.50 L668.50 599.50 L669.00 599.50 L669.50 599.50 L670.00 599.50 L670.50 599.50 L671.00 599.50 L671.50 599.50" stroke="#f050f0" stroke-width="1.6"/>
</g>
<rect x="139.5" y="268.5" width="532" height="343" fill="none" stroke="#000" stroke-width="1.1"/>
<text x="40.3" y="695.6" font-size="12.5" fill="#000" textLength="42.5" lengthAdjust="spacingAndGlyphs" >Options</text>
<path d="M80.8 694.3 H87.3 L84.05 697.6 Z" fill="#000"/>
<text x="98.2" y="695.6" font-size="12.5" font-weight="bold" fill="#000" textLength="12.9" lengthAdjust="spacingAndGlyphs" >X:</text>
<text x="119.8" y="695.6" font-size="12.5" fill="#000" textLength="51.8" lengthAdjust="spacingAndGlyphs" >12.56755</text>
<text x="252.7" y="695.6" font-size="12.5" font-weight="bold" fill="#000" textLength="13.6" lengthAdjust="spacingAndGlyphs" >Y:</text>
<text x="273.5" y="695.6" font-size="12.5" fill="#000" textLength="52.2" lengthAdjust="spacingAndGlyphs" >267324.2</text>
<rect x="25.5" y="718.5" width="90" height="25" rx="3" fill="url(#btn)" stroke="#707070"/>
<rect x="26.5" y="719.5" width="88" height="23" rx="2" fill="none" stroke="#fcfcfc" stroke-opacity="0.8"/>
<text x="42.7" y="735.9" font-size="12.5" fill="#000" textLength="53.6" lengthAdjust="spacingAndGlyphs" >Fit Again!</text>
<rect x="122.5" y="718.5" width="90" height="25" rx="3" fill="url(#btn)" stroke="#707070"/>
<rect x="123.5" y="719.5" width="88" height="23" rx="2" fill="none" stroke="#fcfcfc" stroke-opacity="0.8"/>
<text x="154.3" y="735.9" font-size="12.5" fill="#000" textLength="26" lengthAdjust="spacingAndGlyphs" >Print</text>
<rect x="219.5" y="718.5" width="90" height="25" rx="3" fill="url(#btn)" stroke="#707070"/>
<rect x="220.5" y="719.5" width="88" height="23" rx="2" fill="none" stroke="#fcfcfc" stroke-opacity="0.8"/>
<text x="226.5" y="735.9" font-size="12.5" fill="#000" textLength="74.7" lengthAdjust="spacingAndGlyphs" >HTML Report</text>
<rect x="316.5" y="718.5" width="100" height="25" rx="3" fill="url(#btn)" stroke="#707070"/>
<rect x="317.5" y="719.5" width="98" height="23" rx="2" fill="none" stroke="#fcfcfc" stroke-opacity="0.8"/>
<text x="319.5" y="735.9" font-size="12.5" fill="#000" textLength="93.1" lengthAdjust="spacingAndGlyphs" >Matrix Spectrum</text>
<rect x="423.5" y="718.5" width="122" height="25" rx="3" fill="url(#btn)" stroke="#707070"/>
<rect x="424.5" y="719.5" width="120" height="23" rx="2" fill="none" stroke="#fcfcfc" stroke-opacity="0.8"/>
<text x="426.7" y="735.9" font-size="12.5" fill="#000" textLength="115" lengthAdjust="spacingAndGlyphs" >MC Matrix Spectrum</text>
<rect x="552.5" y="718.5" width="98" height="25" rx="3" fill="url(#btn)" stroke="#707070"/>
<rect x="553.5" y="719.5" width="96" height="23" rx="2" fill="none" stroke="#fcfcfc" stroke-opacity="0.8"/>
<text x="555.3" y="735.9" font-size="12.5" fill="#000" textLength="92.2" lengthAdjust="spacingAndGlyphs" >Peaks Spectrum</text>
<rect x="661.5" y="718.5" width="90" height="25" rx="3" fill="url(#btn)" stroke="#707070"/>
<rect x="662.5" y="719.5" width="88" height="23" rx="2" fill="none" stroke="#fcfcfc" stroke-opacity="0.8"/>
<text x="685.3" y="735.9" font-size="12.5" fill="#000" textLength="43.2" lengthAdjust="spacingAndGlyphs" >Dismiss</text>
</svg></body></html>
